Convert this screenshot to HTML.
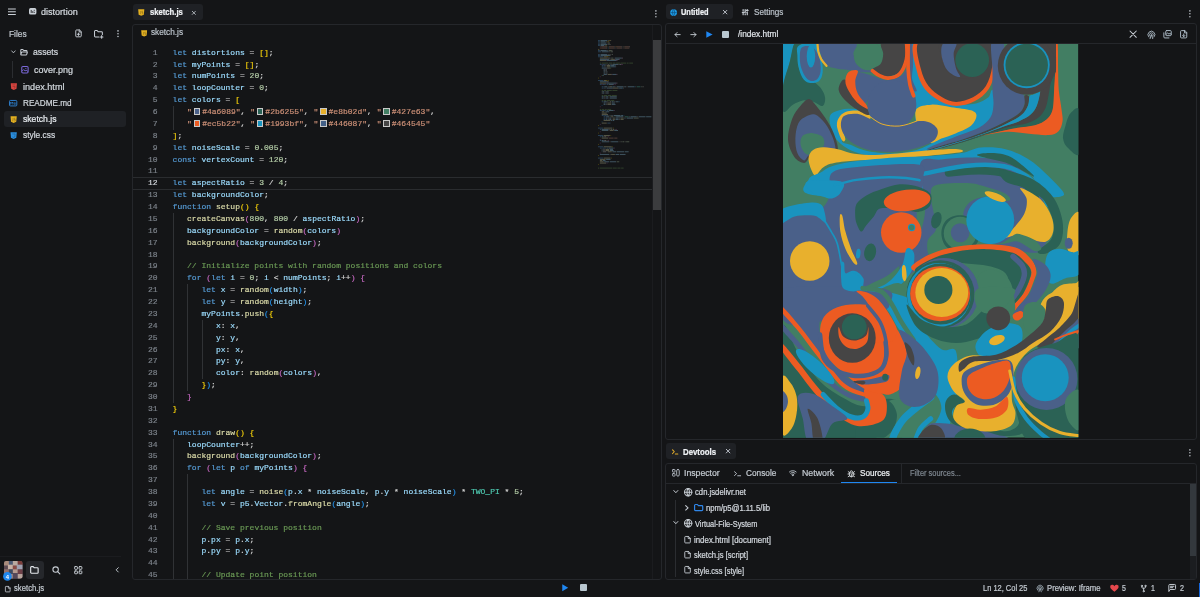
<!DOCTYPE html>
<html lang="en"><head><meta charset="utf-8"><title>distortion</title>
<style>
*{box-sizing:border-box;margin:0;padding:0}
html,body{width:1200px;height:597px;overflow:hidden;background:#141517}
#app{position:absolute;left:0;top:0;width:1200px;height:597px;will-change:transform}
body{font-family:"Liberation Sans",sans-serif;color:#d3d8de;position:relative;-webkit-font-smoothing:antialiased}
.a{position:absolute}
.t{position:absolute;transform-origin:0 50%;-webkit-text-stroke:0.22px currentColor;white-space:nowrap;line-height:12px;font-size:8.6px;color:#d3d8de}
.dim{color:#9aa2ab}
svg{position:absolute;overflow:visible}
.ic{fill:none;stroke:#c9cfd6;stroke-width:1.2;stroke-linecap:round;stroke-linejoin:round}
.panel{position:absolute;border:1px solid #25272b;border-radius:3px;background:#141517}
.tab{position:absolute;background:#1f2125;border-radius:3px}
/* code */
.ln,.cl{position:absolute;font-family:"Liberation Mono",monospace;font-size:8.02px;-webkit-text-stroke:0.18px currentColor;line-height:11.875px;height:11.875px;white-space:pre}
.ln{left:133px;width:24.5px;text-align:right;color:#7d838b}
.ln.cur{color:#d7dbe0}
.cl{left:172.6px;color:#d4d4d4}
.k{color:#569cd6}.v{color:#9cdcfe}.f{color:#dcdcaa}.n{color:#b5cea8}.s{color:#ce9178}.c{color:#6a9955}
.b1{color:#f0cc0a}.b2{color:#c568c0}.b3{color:#2492ea}.t2{color:#4ec9b0}
.cl .t{position:static}
.sw{display:inline-block;width:6.6px;height:6.6px;border:0.8px solid #c8c8c8;margin:0 1.85px 0 1.85px;vertical-align:-0.6px}
.ig{position:absolute;width:1px;background:#303235}

</style></head>
<body>
<div id="app">
<!-- ===== top bar ===== -->
<svg class="ic" style="left:7.7px;top:7.85px;stroke-width:1.15;stroke-linecap:butt" width="7.8" height="8" viewBox="0 0 7.8 8"><path d="M0 1h7.8M0 3.75h7.8M0 6.55h7.8"/></svg>
<svg style="left:28.5px;top:8.3px" width="7.4" height="6.6" viewBox="0 0 9 8"><rect x="0" y="0" width="9" height="8" rx="2" fill="#c9cfd6"/><path d="M2.7 2.4v3.6M4.6 3.8v2.2M6.4 2.2v1.2M6.4 4.6v1.4" stroke="#141517" stroke-width="1" fill="none"/></svg>
<div class="t" style="left:41.10px;top:6.00px;font-size:8.9px;transform:scaleX(1.019);">distortion</div>

<!-- ===== sidebar ===== -->
<div class="t" style="left:8.80px;top:27.50px;font-size:9.8px;transform:scaleX(0.855);color:#c3c9d0">Files</div>
<svg class="ic" style="left:75.4px;top:29.3px" width="7" height="8.8" viewBox="0 0 9 10"><path d="M5.4 0.6H2A1 1 0 0 0 1 1.6v6.8a1 1 0 0 0 1 1h5a1 1 0 0 0 1-1V3.2z M5.4 0.6v2.6H8 M4.5 4.6v3 M3 6.1h3"/></svg>
<svg class="ic" style="left:94px;top:29.6px" width="9.4" height="8.5" viewBox="0 0 11 10"><path d="M6 8.2H1.6a1 1 0 0 1-1-1V1.6a1 1 0 0 1 1-1h2l1.2 1.4h4a1 1 0 0 1 1 1V5.4 M9 6.6v3 M7.5 8.1h3"/></svg>
<svg style="left:117px;top:29.8px" width="2" height="7.4" viewBox="0 0 2 7.6"><circle cx="1" cy="0.9" r="0.8" fill="#c9cfd6"/><circle cx="1" cy="3.8" r="0.8" fill="#c9cfd6"/><circle cx="1" cy="6.7" r="0.8" fill="#c9cfd6"/></svg>

<div class="a" style="left:12.1px;top:60.5px;width:1px;height:17px;background:#2b2d31"></div>
<svg class="ic" style="left:11.1px;top:50.3px;stroke-width:1.2" width="4.9" height="3.9" viewBox="0 0 7 5"><path d="M1 1l2.5 2.8L6 1"/></svg>
<svg class="ic" style="left:20.1px;top:48.6px" width="8.1" height="6.7" viewBox="0 0 9 8"><path d="M0.6 6.6V1.4a.8.8 0 0 1 .8-.8h1.6l1 1.1h3.2a.8.8 0 0 1 .8.8v.9 M0.6 6.8l1-2.8a.7.7 0 0 1 .7-.5h5.6a.5.5 0 0 1 .5.7l-.8 2.4a.8.8 0 0 1-.7.5H1.2a.6.6 0 0 1-.6-.5z"/></svg>
<div class="t" style="left:32.90px;top:45.50px;font-size:9.4px;transform:scaleX(0.924);">assets</div>
<svg style="left:20.9px;top:66.2px" width="7.9" height="7.5" viewBox="0 0 8 8"><rect x="0.6" y="0.6" width="6.8" height="6.8" rx="1.2" fill="none" stroke="#7a68d8" stroke-width="1.1"/><path d="M0.8 5.6l1.8-1.8 1.6 1.4 1-.8 2 1.4" fill="none" stroke="#7a68d8" stroke-width="1"/><circle cx="5" cy="2.6" r="0.6" fill="#7a68d8"/></svg>
<div class="t" style="left:33.70px;top:63.50px;font-size:9.4px;transform:scaleX(0.959);">cover.png</div>

<svg style="left:9.9px;top:83px" width="7.7" height="7.2" viewBox="0 0 8 9"><path d="M0.1 0.3h7.8l-.6 6.9L4 8.7 .7 7.2z" fill="#d9453f"/><path d="M2.2 2.4h3.6M2.4 4.4h3.2l-.2 1.8L4 6.6" fill="none" stroke="#141517" stroke-width="0.6" opacity=".5"/></svg>
<div class="t" style="left:22.70px;top:80.50px;font-size:9.4px;transform:scaleX(0.971);">index.html</div>
<svg style="left:9.3px;top:99.6px" width="8.3" height="6.4" viewBox="0 0 9 7"><rect x="0.5" y="0.5" width="8" height="6" rx="1" fill="none" stroke="#2f86d8" stroke-width="1"/><path d="M1.8 5V2.2l1.2 1.4 1.2-1.4V5M6.4 2.2v2.6M5.4 3.8l1 1.2 1-1.2" fill="none" stroke="#2f86d8" stroke-width="0.8"/></svg>
<div class="t" style="left:22.70px;top:96.50px;font-size:9.4px;transform:scaleX(0.871);">README.md</div>
<div class="a" style="left:4.1px;top:111.3px;width:122.3px;height:15.4px;background:#1f2125;border-radius:3px"></div>
<svg style="left:9.9px;top:115.5px" width="7.3" height="7.2" viewBox="0 0 8 9"><path d="M0.1 0.3h7.8l-.6 6.9L4 8.7 .7 7.2z" fill="#e3b021"/><path d="M3.2 2.6v3.2l-1 .4M6 2.8H4.8v1.6H6v1.6l-1.2.4" fill="none" stroke="#141517" stroke-width="0.6" opacity=".5"/></svg>
<div class="t" style="left:22.70px;top:112.50px;font-size:9.4px;transform:scaleX(0.919);color:#e8ecf0">sketch.js</div>
<svg style="left:9.9px;top:131.7px" width="7.3" height="7.3" viewBox="0 0 8 9"><path d="M0.1 0.3h7.8l-.6 6.9L4 8.7 .7 7.2z" fill="#2a8fe0"/><path d="M2.2 2.4h3.6l-.3 3.6L4 6.6l-1.4-.6" fill="none" stroke="#141517" stroke-width="0.6" opacity=".5"/></svg>
<div class="t" style="left:22.70px;top:128.50px;font-size:9.4px;transform:scaleX(0.893);">style.css</div>

<!-- sidebar bottom -->
<div class="a" style="left:0;top:556px;width:121px;height:1px;background:#1b1c1f"></div>
<svg style="left:4.2px;top:561.3px" width="18.7" height="17.7" viewBox="0 0 19 19" preserveAspectRatio="none"><defs><clipPath id="avc"><rect width="19" height="19" rx="2.5"/></clipPath></defs><g clip-path="url(#avc)"><rect width="19" height="19" fill="#6b5f66"/><rect x="0" y="0" width="5" height="5" fill="#a98c7c"/><rect x="5" y="0" width="4" height="4" fill="#4a5a76"/><rect x="9" y="0" width="5" height="5" fill="#b9a9a0"/><rect x="14" y="0" width="5" height="4" fill="#7a3c3a"/><rect x="0" y="5" width="4" height="4" fill="#5d4a52"/><rect x="4" y="4" width="5" height="5" fill="#c7b1a5"/><rect x="9" y="5" width="4" height="4" fill="#8a4a44"/><rect x="13" y="4" width="6" height="5" fill="#9fa0b0"/><rect x="0" y="9" width="5" height="5" fill="#93706a"/><rect x="5" y="9" width="4" height="5" fill="#3f4a60"/><rect x="9" y="9" width="5" height="4" fill="#b59a90"/><rect x="14" y="9" width="5" height="5" fill="#6e4048"/><rect x="4" y="14" width="5" height="5" fill="#a78c86"/><rect x="9" y="13" width="5" height="6" fill="#54485a"/><rect x="14" y="14" width="5" height="5" fill="#b8a49c"/></g></svg>
<svg style="left:3.2px;top:571.8px" width="8.8" height="8.8" viewBox="0 0 9 9"><circle cx="4.5" cy="4.5" r="4.4" fill="#1e88f0"/><text x="4.5" y="6.7" font-size="6" font-family="Liberation Sans, sans-serif" font-weight="bold" text-anchor="middle" fill="#fff">4</text></svg>
<div class="a" style="left:25.5px;top:561.3px;width:18.5px;height:17.7px;background:#25272b;border-radius:3px"></div>
<svg class="ic" style="left:30.3px;top:565.7px;stroke:#e6eaee;stroke-width:1.3" width="8.8" height="7.8" viewBox="0 0 10 9"><path d="M0.7 7.4V1.6a.9.9 0 0 1 .9-.9h2l1.1 1.3h3.7a.9.9 0 0 1 .9.9v4.5a.9.9 0 0 1-.9.9H1.6a.9.9 0 0 1-.9-.9z"/></svg>
<svg class="ic" style="left:51.9px;top:566px;stroke-width:1.25" width="8.6" height="8.5" viewBox="0 0 10 10"><circle cx="4.2" cy="4.2" r="3.2"/><path d="M6.6 6.6l2.6 2.6"/></svg>
<svg class="ic" style="left:73.5px;top:565.7px;stroke-width:1.05" width="8.5" height="8.3" viewBox="0 0 9 9"><rect x="0.6" y="0.6" width="3" height="3" rx=".6"/><rect x="5.4" y="0.6" width="3" height="3" rx=".6"/><rect x="0.6" y="5.4" width="3" height="3" rx=".6"/><rect x="5.4" y="5.4" width="3" height="3" rx=".6"/></svg>
<svg class="ic" style="left:115px;top:567.2px;stroke-width:1.3" width="4.4" height="5.7" viewBox="0 0 5 8"><path d="M4 1L1 4l3 3"/></svg>

<!-- ===== editor tabs ===== -->
<div class="tab" style="left:132.5px;top:3.7px;width:70.4px;height:16px"></div>
<svg style="left:137.7px;top:8.7px" width="6.5" height="7.1" viewBox="0 0 8 9"><path d="M0.1 0.3h7.8l-.6 6.9L4 8.7 .7 7.2z" fill="#e3b021"/><path d="M3.2 2.6v3.2l-1 .4M6 2.8H4.8v1.6H6v1.6l-1.2.4" fill="none" stroke="#141517" stroke-width="0.6" opacity=".5"/></svg>
<div class="t" style="left:149.60px;top:6.00px;font-size:8.9px;transform:scaleX(0.864);color:#f0f3f6;font-weight:bold">sketch.js</div>
<svg class="ic" style="left:192.1px;top:10.5px;stroke-width:0.85;stroke-linecap:butt" width="3.7" height="3.7" viewBox="0 0 4 4"><path d="M0 0l4 4M4 0L0 4"/></svg>
<svg style="left:655.3px;top:9.8px" width="1.8" height="7.6" viewBox="0 0 2 7.6" preserveAspectRatio="none"><circle cx="1" cy="0.9" r="0.8" fill="#c9cfd6"/><circle cx="1" cy="3.8" r="0.8" fill="#c9cfd6"/><circle cx="1" cy="6.7" r="0.8" fill="#c9cfd6"/></svg>

<!-- ===== editor panel ===== -->
<div class="panel" style="left:132px;top:23.7px;width:530.3px;height:556px"></div>
<svg style="left:140.8px;top:30px" width="6.3" height="6.8" viewBox="0 0 8 9"><path d="M0.1 0.3h7.8l-.6 6.9L4 8.7 .7 7.2z" fill="#e3b021"/><path d="M3.2 2.6v3.2l-1 .4M6 2.8H4.8v1.6H6v1.6l-1.2.4" fill="none" stroke="#141517" stroke-width="0.6" opacity=".5"/></svg>
<div class="t" style="left:150.80px;top:26.00px;font-size:8.9px;transform:scaleX(0.927);color:#b9c0c8">sketch.js</div>
<!-- current line -->
<div class="a" style="left:133px;top:177.3px;width:519px;height:12.4px;border-top:1px solid #2a2c2f;border-bottom:1px solid #2a2c2f"></div>
<div class="ig" style="left:172.6px;top:106.08px;height:23.75px"></div><div class="ig" style="left:172.6px;top:212.95px;height:190.00px"></div><div class="ig" style="left:187.1px;top:284.20px;height:106.88px"></div><div class="ig" style="left:201.6px;top:319.82px;height:59.38px"></div><div class="ig" style="left:172.6px;top:438.57px;height:140.13px"></div><div class="ig" style="left:187.1px;top:474.20px;height:104.50px"></div>
<div class="ln" style="top:46.700px">1</div><div class="cl" style="top:46.700px"><span class="k">let</span> <span class="v">distortions</span> = <span class="b1">[]</span>;</div>
<div class="ln" style="top:58.575px">2</div><div class="cl" style="top:58.575px"><span class="k">let</span> <span class="v">myPoints</span> = <span class="b1">[]</span>;</div>
<div class="ln" style="top:70.450px">3</div><div class="cl" style="top:70.450px"><span class="k">let</span> <span class="v">numPoints</span> = <span class="n">20</span>;</div>
<div class="ln" style="top:82.325px">4</div><div class="cl" style="top:82.325px"><span class="k">let</span> <span class="v">loopCounter</span> = <span class="n">0</span>;</div>
<div class="ln" style="top:94.200px">5</div><div class="cl" style="top:94.200px"><span class="k">let</span> <span class="v">colors</span> = <span class="b1">[</span></div>
<div class="ln" style="top:106.075px">6</div><div class="cl" style="top:106.075px">   <span class="s">"</span><i class="sw" style="background:#4a6089"></i><span class="s">#4a6089"</span>, <span class="s">"</span><i class="sw" style="background:#2b6255"></i><span class="s">#2b6255"</span>, <span class="s">"</span><i class="sw" style="background:#e8b02d"></i><span class="s">#e8b02d"</span>, <span class="s">"</span><i class="sw" style="background:#427e63"></i><span class="s">#427e63"</span>,</div>
<div class="ln" style="top:117.950px">7</div><div class="cl" style="top:117.950px">   <span class="s">"</span><i class="sw" style="background:#ec5b22"></i><span class="s">#ec5b22"</span>, <span class="s">"</span><i class="sw" style="background:#1993bf"></i><span class="s">#1993bf"</span>, <span class="s">"</span><i class="sw" style="background:#446087"></i><span class="s">#446087"</span>, <span class="s">"</span><i class="sw" style="background:#464545"></i><span class="s">#464545"</span></div>
<div class="ln" style="top:129.825px">8</div><div class="cl" style="top:129.825px"><span class="b1">]</span>;</div>
<div class="ln" style="top:141.700px">9</div><div class="cl" style="top:141.700px"><span class="k">let</span> <span class="v">noiseScale</span> = <span class="n">0.005</span>;</div>
<div class="ln" style="top:153.575px">10</div><div class="cl" style="top:153.575px"><span class="k">const</span> <span class="v">vertexCount</span> = <span class="n">120</span>;</div>
<div class="ln" style="top:165.450px">11</div><div class="cl" style="top:165.450px"></div>
<div class="ln cur" style="top:177.325px">12</div><div class="cl" style="top:177.325px"><span class="k">let</span> <span class="v">aspectRatio</span> = <span class="n">3</span> / <span class="n">4</span>;</div>
<div class="ln" style="top:189.200px">13</div><div class="cl" style="top:189.200px"><span class="k">let</span> <span class="v">backgroundColor</span>;</div>
<div class="ln" style="top:201.075px">14</div><div class="cl" style="top:201.075px"><span class="k">function</span> <span class="f">setup</span><span class="b1">()</span> <span class="b1">{</span></div>
<div class="ln" style="top:212.950px">15</div><div class="cl" style="top:212.950px">   <span class="f">createCanvas</span><span class="b2">(</span><span class="n">800</span>, <span class="n">800</span> / <span class="v">aspectRatio</span><span class="b2">)</span>;</div>
<div class="ln" style="top:224.825px">16</div><div class="cl" style="top:224.825px">   <span class="v">backgroundColor</span> = <span class="f">random</span><span class="b2">(</span><span class="v">colors</span><span class="b2">)</span></div>
<div class="ln" style="top:236.700px">17</div><div class="cl" style="top:236.700px">   <span class="f">background</span><span class="b2">(</span><span class="v">backgroundColor</span><span class="b2">)</span>;</div>
<div class="ln" style="top:248.575px">18</div><div class="cl" style="top:248.575px"></div>
<div class="ln" style="top:260.450px">19</div><div class="cl" style="top:260.450px">   <span class="c">// Initialize points with random positions and colors</span></div>
<div class="ln" style="top:272.325px">20</div><div class="cl" style="top:272.325px">   <span class="k">for</span> <span class="b2">(</span><span class="k">let</span> <span class="v">i</span> = <span class="n">0</span>; <span class="v">i</span> &lt; <span class="v">numPoints</span>; <span class="v">i</span>++<span class="b2">)</span> <span class="b2">{</span></div>
<div class="ln" style="top:284.200px">21</div><div class="cl" style="top:284.200px">      <span class="k">let</span> <span class="v">x</span> = <span class="f">random</span><span class="b3">(</span><span class="v">width</span><span class="b3">)</span>;</div>
<div class="ln" style="top:296.075px">22</div><div class="cl" style="top:296.075px">      <span class="k">let</span> <span class="v">y</span> = <span class="f">random</span><span class="b3">(</span><span class="v">height</span><span class="b3">)</span>;</div>
<div class="ln" style="top:307.950px">23</div><div class="cl" style="top:307.950px">      <span class="v">myPoints</span>.<span class="f">push</span><span class="b3">(</span><span class="b1">{</span></div>
<div class="ln" style="top:319.825px">24</div><div class="cl" style="top:319.825px">         <span class="v">x</span>: <span class="v">x</span>,</div>
<div class="ln" style="top:331.700px">25</div><div class="cl" style="top:331.700px">         <span class="v">y</span>: <span class="v">y</span>,</div>
<div class="ln" style="top:343.575px">26</div><div class="cl" style="top:343.575px">         <span class="v">px</span>: <span class="v">x</span>,</div>
<div class="ln" style="top:355.450px">27</div><div class="cl" style="top:355.450px">         <span class="v">py</span>: <span class="v">y</span>,</div>
<div class="ln" style="top:367.325px">28</div><div class="cl" style="top:367.325px">         <span class="v">color</span>: <span class="f">random</span><span class="b2">(</span><span class="v">colors</span><span class="b2">)</span>,</div>
<div class="ln" style="top:379.200px">29</div><div class="cl" style="top:379.200px">      <span class="b1">}</span><span class="b3">)</span>;</div>
<div class="ln" style="top:391.075px">30</div><div class="cl" style="top:391.075px">   <span class="b2">}</span></div>
<div class="ln" style="top:402.950px">31</div><div class="cl" style="top:402.950px"><span class="b1">}</span></div>
<div class="ln" style="top:414.825px">32</div><div class="cl" style="top:414.825px"></div>
<div class="ln" style="top:426.700px">33</div><div class="cl" style="top:426.700px"><span class="k">function</span> <span class="f">draw</span><span class="b1">()</span> <span class="b1">{</span></div>
<div class="ln" style="top:438.575px">34</div><div class="cl" style="top:438.575px">   <span class="v">loopCounter</span>++;</div>
<div class="ln" style="top:450.450px">35</div><div class="cl" style="top:450.450px">   <span class="f">background</span><span class="b2">(</span><span class="v">backgroundColor</span><span class="b2">)</span>;</div>
<div class="ln" style="top:462.325px">36</div><div class="cl" style="top:462.325px">   <span class="k">for</span> <span class="b2">(</span><span class="k">let</span> <span class="v">p</span> <span class="k">of</span> <span class="v">myPoints</span><span class="b2">)</span> <span class="b2">{</span></div>
<div class="ln" style="top:474.200px">37</div><div class="cl" style="top:474.200px"></div>
<div class="ln" style="top:486.075px">38</div><div class="cl" style="top:486.075px">      <span class="k">let</span> <span class="v">angle</span> = <span class="f">noise</span><span class="b3">(</span><span class="v">p</span>.<span class="v">x</span> * <span class="v">noiseScale</span>, <span class="v">p</span>.<span class="v">y</span> * <span class="v">noiseScale</span><span class="b3">)</span> * <span class="t2">TWO_PI</span> * <span class="n">5</span>;</div>
<div class="ln" style="top:497.950px">39</div><div class="cl" style="top:497.950px">      <span class="k">let</span> <span class="v">v</span> = <span class="v">p5</span>.<span class="v">Vector</span>.<span class="f">fromAngle</span><span class="b3">(</span><span class="v">angle</span><span class="b3">)</span>;</div>
<div class="ln" style="top:509.825px">40</div><div class="cl" style="top:509.825px"></div>
<div class="ln" style="top:521.700px">41</div><div class="cl" style="top:521.700px">      <span class="c">// Save previous position</span></div>
<div class="ln" style="top:533.575px">42</div><div class="cl" style="top:533.575px">      <span class="v">p</span>.<span class="v">px</span> = <span class="v">p</span>.<span class="v">x</span>;</div>
<div class="ln" style="top:545.450px">43</div><div class="cl" style="top:545.450px">      <span class="v">p</span>.<span class="v">py</span> = <span class="v">p</span>.<span class="v">y</span>;</div>
<div class="ln" style="top:557.325px">44</div><div class="cl" style="top:557.325px"></div>
<div class="ln" style="top:569.200px">45</div><div class="cl" style="top:569.200px">      <span class="c">// Update point position</span></div>
<svg style="left:598.2px;top:39.6px" width="54" height="129.8" viewBox="0 0 54 129.8" opacity="0.42"><rect x="0.00" y="0.20" width="1.88" height="0.75" fill="#569cd6"/><rect x="2.50" y="0.20" width="6.88" height="0.75" fill="#9cdcfe"/><rect x="10.00" y="0.20" width="0.62" height="0.75" fill="#d4d4d4"/><rect x="11.25" y="0.20" width="1.25" height="0.75" fill="#ffd700"/><rect x="12.50" y="0.20" width="0.62" height="0.75" fill="#d4d4d4"/><rect x="0.00" y="1.45" width="1.88" height="0.75" fill="#569cd6"/><rect x="2.50" y="1.45" width="5.00" height="0.75" fill="#9cdcfe"/><rect x="8.12" y="1.45" width="0.62" height="0.75" fill="#d4d4d4"/><rect x="9.38" y="1.45" width="1.25" height="0.75" fill="#ffd700"/><rect x="10.62" y="1.45" width="0.62" height="0.75" fill="#d4d4d4"/><rect x="0.00" y="2.70" width="1.88" height="0.75" fill="#569cd6"/><rect x="2.50" y="2.70" width="5.62" height="0.75" fill="#9cdcfe"/><rect x="8.75" y="2.70" width="0.62" height="0.75" fill="#d4d4d4"/><rect x="10.00" y="2.70" width="1.25" height="0.75" fill="#b5cea8"/><rect x="11.25" y="2.70" width="0.62" height="0.75" fill="#d4d4d4"/><rect x="0.00" y="3.95" width="1.88" height="0.75" fill="#569cd6"/><rect x="2.50" y="3.95" width="6.88" height="0.75" fill="#9cdcfe"/><rect x="10.00" y="3.95" width="0.62" height="0.75" fill="#d4d4d4"/><rect x="11.25" y="3.95" width="0.62" height="0.75" fill="#b5cea8"/><rect x="11.88" y="3.95" width="0.62" height="0.75" fill="#d4d4d4"/><rect x="0.00" y="5.20" width="1.88" height="0.75" fill="#569cd6"/><rect x="2.50" y="5.20" width="3.75" height="0.75" fill="#9cdcfe"/><rect x="6.88" y="5.20" width="0.62" height="0.75" fill="#d4d4d4"/><rect x="8.12" y="5.20" width="0.62" height="0.75" fill="#ffd700"/><rect x="1.88" y="6.45" width="0.62" height="0.75" fill="#ce9178"/><rect x="2.50" y="6.45" width="0.81" height="0.75" fill="#4a6089"/><rect x="3.31" y="6.45" width="5.00" height="0.75" fill="#ce9178"/><rect x="8.31" y="6.45" width="0.62" height="0.75" fill="#d4d4d4"/><rect x="9.56" y="6.45" width="0.62" height="0.75" fill="#ce9178"/><rect x="10.19" y="6.45" width="0.81" height="0.75" fill="#2b6255"/><rect x="11.00" y="6.45" width="5.00" height="0.75" fill="#ce9178"/><rect x="16.00" y="6.45" width="0.62" height="0.75" fill="#d4d4d4"/><rect x="17.25" y="6.45" width="0.62" height="0.75" fill="#ce9178"/><rect x="17.88" y="6.45" width="0.81" height="0.75" fill="#e8b02d"/><rect x="18.69" y="6.45" width="5.00" height="0.75" fill="#ce9178"/><rect x="23.69" y="6.45" width="0.62" height="0.75" fill="#d4d4d4"/><rect x="24.94" y="6.45" width="0.62" height="0.75" fill="#ce9178"/><rect x="25.56" y="6.45" width="0.81" height="0.75" fill="#427e63"/><rect x="26.38" y="6.45" width="5.00" height="0.75" fill="#ce9178"/><rect x="31.38" y="6.45" width="0.62" height="0.75" fill="#d4d4d4"/><rect x="1.88" y="7.70" width="0.62" height="0.75" fill="#ce9178"/><rect x="2.50" y="7.70" width="0.81" height="0.75" fill="#ec5b22"/><rect x="3.31" y="7.70" width="5.00" height="0.75" fill="#ce9178"/><rect x="8.31" y="7.70" width="0.62" height="0.75" fill="#d4d4d4"/><rect x="9.56" y="7.70" width="0.62" height="0.75" fill="#ce9178"/><rect x="10.19" y="7.70" width="0.81" height="0.75" fill="#1993bf"/><rect x="11.00" y="7.70" width="5.00" height="0.75" fill="#ce9178"/><rect x="16.00" y="7.70" width="0.62" height="0.75" fill="#d4d4d4"/><rect x="17.25" y="7.70" width="0.62" height="0.75" fill="#ce9178"/><rect x="17.88" y="7.70" width="0.81" height="0.75" fill="#446087"/><rect x="18.69" y="7.70" width="5.00" height="0.75" fill="#ce9178"/><rect x="23.69" y="7.70" width="0.62" height="0.75" fill="#d4d4d4"/><rect x="24.94" y="7.70" width="0.62" height="0.75" fill="#ce9178"/><rect x="25.56" y="7.70" width="0.81" height="0.75" fill="#464545"/><rect x="26.38" y="7.70" width="5.00" height="0.75" fill="#ce9178"/><rect x="0.00" y="8.95" width="0.62" height="0.75" fill="#ffd700"/><rect x="0.62" y="8.95" width="0.62" height="0.75" fill="#d4d4d4"/><rect x="0.00" y="10.20" width="1.88" height="0.75" fill="#569cd6"/><rect x="2.50" y="10.20" width="6.25" height="0.75" fill="#9cdcfe"/><rect x="9.38" y="10.20" width="0.62" height="0.75" fill="#d4d4d4"/><rect x="10.62" y="10.20" width="3.12" height="0.75" fill="#b5cea8"/><rect x="13.75" y="10.20" width="0.62" height="0.75" fill="#d4d4d4"/><rect x="0.00" y="11.45" width="3.12" height="0.75" fill="#569cd6"/><rect x="3.75" y="11.45" width="6.88" height="0.75" fill="#9cdcfe"/><rect x="11.25" y="11.45" width="0.62" height="0.75" fill="#d4d4d4"/><rect x="12.50" y="11.45" width="1.88" height="0.75" fill="#b5cea8"/><rect x="14.38" y="11.45" width="0.62" height="0.75" fill="#d4d4d4"/><rect x="0.00" y="13.95" width="1.88" height="0.75" fill="#569cd6"/><rect x="2.50" y="13.95" width="6.88" height="0.75" fill="#9cdcfe"/><rect x="10.00" y="13.95" width="0.62" height="0.75" fill="#d4d4d4"/><rect x="11.25" y="13.95" width="0.62" height="0.75" fill="#b5cea8"/><rect x="12.50" y="13.95" width="0.62" height="0.75" fill="#d4d4d4"/><rect x="13.75" y="13.95" width="0.62" height="0.75" fill="#b5cea8"/><rect x="14.38" y="13.95" width="0.62" height="0.75" fill="#d4d4d4"/><rect x="0.00" y="15.20" width="1.88" height="0.75" fill="#569cd6"/><rect x="2.50" y="15.20" width="9.38" height="0.75" fill="#9cdcfe"/><rect x="11.88" y="15.20" width="0.62" height="0.75" fill="#d4d4d4"/><rect x="0.00" y="16.45" width="5.00" height="0.75" fill="#569cd6"/><rect x="5.62" y="16.45" width="3.12" height="0.75" fill="#dcdcaa"/><rect x="8.75" y="16.45" width="1.25" height="0.75" fill="#ffd700"/><rect x="10.62" y="16.45" width="0.62" height="0.75" fill="#ffd700"/><rect x="1.88" y="17.70" width="7.50" height="0.75" fill="#dcdcaa"/><rect x="9.38" y="17.70" width="0.62" height="0.75" fill="#da70d6"/><rect x="10.00" y="17.70" width="1.88" height="0.75" fill="#b5cea8"/><rect x="11.88" y="17.70" width="0.62" height="0.75" fill="#d4d4d4"/><rect x="13.12" y="17.70" width="1.88" height="0.75" fill="#b5cea8"/><rect x="15.62" y="17.70" width="0.62" height="0.75" fill="#d4d4d4"/><rect x="16.88" y="17.70" width="6.88" height="0.75" fill="#9cdcfe"/><rect x="23.75" y="17.70" width="0.62" height="0.75" fill="#da70d6"/><rect x="24.38" y="17.70" width="0.62" height="0.75" fill="#d4d4d4"/><rect x="1.88" y="18.95" width="9.38" height="0.75" fill="#9cdcfe"/><rect x="11.88" y="18.95" width="0.62" height="0.75" fill="#d4d4d4"/><rect x="13.12" y="18.95" width="3.75" height="0.75" fill="#dcdcaa"/><rect x="16.88" y="18.95" width="0.62" height="0.75" fill="#da70d6"/><rect x="17.50" y="18.95" width="3.75" height="0.75" fill="#9cdcfe"/><rect x="21.25" y="18.95" width="0.62" height="0.75" fill="#da70d6"/><rect x="1.88" y="20.20" width="6.25" height="0.75" fill="#dcdcaa"/><rect x="8.12" y="20.20" width="0.62" height="0.75" fill="#da70d6"/><rect x="8.75" y="20.20" width="9.38" height="0.75" fill="#9cdcfe"/><rect x="18.12" y="20.20" width="0.62" height="0.75" fill="#da70d6"/><rect x="18.75" y="20.20" width="0.62" height="0.75" fill="#d4d4d4"/><rect x="1.88" y="22.70" width="1.25" height="0.75" fill="#6a9955"/><rect x="3.75" y="22.70" width="6.25" height="0.75" fill="#6a9955"/><rect x="10.62" y="22.70" width="3.75" height="0.75" fill="#6a9955"/><rect x="15.00" y="22.70" width="2.50" height="0.75" fill="#6a9955"/><rect x="18.12" y="22.70" width="3.75" height="0.75" fill="#6a9955"/><rect x="22.50" y="22.70" width="5.62" height="0.75" fill="#6a9955"/><rect x="28.75" y="22.70" width="1.88" height="0.75" fill="#6a9955"/><rect x="31.25" y="22.70" width="3.75" height="0.75" fill="#6a9955"/><rect x="1.88" y="23.95" width="1.88" height="0.75" fill="#569cd6"/><rect x="4.38" y="23.95" width="0.62" height="0.75" fill="#da70d6"/><rect x="5.00" y="23.95" width="1.88" height="0.75" fill="#569cd6"/><rect x="7.50" y="23.95" width="0.62" height="0.75" fill="#9cdcfe"/><rect x="8.75" y="23.95" width="0.62" height="0.75" fill="#d4d4d4"/><rect x="10.00" y="23.95" width="0.62" height="0.75" fill="#b5cea8"/><rect x="10.62" y="23.95" width="0.62" height="0.75" fill="#d4d4d4"/><rect x="11.88" y="23.95" width="0.62" height="0.75" fill="#9cdcfe"/><rect x="13.12" y="23.95" width="0.62" height="0.75" fill="#d4d4d4"/><rect x="14.38" y="23.95" width="5.62" height="0.75" fill="#9cdcfe"/><rect x="20.00" y="23.95" width="0.62" height="0.75" fill="#d4d4d4"/><rect x="21.25" y="23.95" width="0.62" height="0.75" fill="#9cdcfe"/><rect x="21.88" y="23.95" width="1.25" height="0.75" fill="#d4d4d4"/><rect x="23.12" y="23.95" width="0.62" height="0.75" fill="#da70d6"/><rect x="24.38" y="23.95" width="0.62" height="0.75" fill="#da70d6"/><rect x="3.75" y="25.20" width="1.88" height="0.75" fill="#569cd6"/><rect x="6.25" y="25.20" width="0.62" height="0.75" fill="#9cdcfe"/><rect x="7.50" y="25.20" width="0.62" height="0.75" fill="#d4d4d4"/><rect x="8.75" y="25.20" width="3.75" height="0.75" fill="#dcdcaa"/><rect x="12.50" y="25.20" width="0.62" height="0.75" fill="#179fff"/><rect x="13.12" y="25.20" width="3.12" height="0.75" fill="#9cdcfe"/><rect x="16.25" y="25.20" width="0.62" height="0.75" fill="#179fff"/><rect x="16.88" y="25.20" width="0.62" height="0.75" fill="#d4d4d4"/><rect x="3.75" y="26.45" width="1.88" height="0.75" fill="#569cd6"/><rect x="6.25" y="26.45" width="0.62" height="0.75" fill="#9cdcfe"/><rect x="7.50" y="26.45" width="0.62" height="0.75" fill="#d4d4d4"/><rect x="8.75" y="26.45" width="3.75" height="0.75" fill="#dcdcaa"/><rect x="12.50" y="26.45" width="0.62" height="0.75" fill="#179fff"/><rect x="13.12" y="26.45" width="3.75" height="0.75" fill="#9cdcfe"/><rect x="16.88" y="26.45" width="0.62" height="0.75" fill="#179fff"/><rect x="17.50" y="26.45" width="0.62" height="0.75" fill="#d4d4d4"/><rect x="3.75" y="27.70" width="5.00" height="0.75" fill="#9cdcfe"/><rect x="8.75" y="27.70" width="0.62" height="0.75" fill="#d4d4d4"/><rect x="9.38" y="27.70" width="2.50" height="0.75" fill="#dcdcaa"/><rect x="11.88" y="27.70" width="0.62" height="0.75" fill="#179fff"/><rect x="12.50" y="27.70" width="0.62" height="0.75" fill="#ffd700"/><rect x="5.62" y="28.95" width="0.62" height="0.75" fill="#9cdcfe"/><rect x="6.25" y="28.95" width="0.62" height="0.75" fill="#d4d4d4"/><rect x="7.50" y="28.95" width="0.62" height="0.75" fill="#9cdcfe"/><rect x="8.12" y="28.95" width="0.62" height="0.75" fill="#d4d4d4"/><rect x="5.62" y="30.20" width="0.62" height="0.75" fill="#9cdcfe"/><rect x="6.25" y="30.20" width="0.62" height="0.75" fill="#d4d4d4"/><rect x="7.50" y="30.20" width="0.62" height="0.75" fill="#9cdcfe"/><rect x="8.12" y="30.20" width="0.62" height="0.75" fill="#d4d4d4"/><rect x="5.62" y="31.45" width="1.25" height="0.75" fill="#9cdcfe"/><rect x="6.88" y="31.45" width="0.62" height="0.75" fill="#d4d4d4"/><rect x="8.12" y="31.45" width="0.62" height="0.75" fill="#9cdcfe"/><rect x="8.75" y="31.45" width="0.62" height="0.75" fill="#d4d4d4"/><rect x="5.62" y="32.70" width="1.25" height="0.75" fill="#9cdcfe"/><rect x="6.88" y="32.70" width="0.62" height="0.75" fill="#d4d4d4"/><rect x="8.12" y="32.70" width="0.62" height="0.75" fill="#9cdcfe"/><rect x="8.75" y="32.70" width="0.62" height="0.75" fill="#d4d4d4"/><rect x="5.62" y="33.95" width="3.12" height="0.75" fill="#9cdcfe"/><rect x="8.75" y="33.95" width="0.62" height="0.75" fill="#d4d4d4"/><rect x="10.00" y="33.95" width="3.75" height="0.75" fill="#dcdcaa"/><rect x="13.75" y="33.95" width="0.62" height="0.75" fill="#da70d6"/><rect x="14.38" y="33.95" width="3.75" height="0.75" fill="#9cdcfe"/><rect x="18.12" y="33.95" width="0.62" height="0.75" fill="#da70d6"/><rect x="18.75" y="33.95" width="0.62" height="0.75" fill="#d4d4d4"/><rect x="3.75" y="35.20" width="0.62" height="0.75" fill="#ffd700"/><rect x="4.38" y="35.20" width="0.62" height="0.75" fill="#179fff"/><rect x="5.00" y="35.20" width="0.62" height="0.75" fill="#d4d4d4"/><rect x="1.88" y="36.45" width="0.62" height="0.75" fill="#da70d6"/><rect x="0.00" y="37.70" width="0.62" height="0.75" fill="#ffd700"/><rect x="0.00" y="40.20" width="5.00" height="0.75" fill="#569cd6"/><rect x="5.62" y="40.20" width="2.50" height="0.75" fill="#dcdcaa"/><rect x="8.12" y="40.20" width="1.25" height="0.75" fill="#ffd700"/><rect x="10.00" y="40.20" width="0.62" height="0.75" fill="#ffd700"/><rect x="1.88" y="41.45" width="6.88" height="0.75" fill="#9cdcfe"/><rect x="8.75" y="41.45" width="1.88" height="0.75" fill="#d4d4d4"/><rect x="1.88" y="42.70" width="6.25" height="0.75" fill="#dcdcaa"/><rect x="8.12" y="42.70" width="0.62" height="0.75" fill="#da70d6"/><rect x="8.75" y="42.70" width="9.38" height="0.75" fill="#9cdcfe"/><rect x="18.12" y="42.70" width="0.62" height="0.75" fill="#da70d6"/><rect x="18.75" y="42.70" width="0.62" height="0.75" fill="#d4d4d4"/><rect x="1.88" y="43.95" width="1.88" height="0.75" fill="#569cd6"/><rect x="4.38" y="43.95" width="0.62" height="0.75" fill="#da70d6"/><rect x="5.00" y="43.95" width="1.88" height="0.75" fill="#569cd6"/><rect x="7.50" y="43.95" width="0.62" height="0.75" fill="#9cdcfe"/><rect x="8.75" y="43.95" width="1.25" height="0.75" fill="#569cd6"/><rect x="10.62" y="43.95" width="5.00" height="0.75" fill="#9cdcfe"/><rect x="15.62" y="43.95" width="0.62" height="0.75" fill="#da70d6"/><rect x="16.88" y="43.95" width="0.62" height="0.75" fill="#da70d6"/><rect x="3.75" y="46.45" width="1.88" height="0.75" fill="#569cd6"/><rect x="6.25" y="46.45" width="3.12" height="0.75" fill="#9cdcfe"/><rect x="10.00" y="46.45" width="0.62" height="0.75" fill="#d4d4d4"/><rect x="11.25" y="46.45" width="3.12" height="0.75" fill="#dcdcaa"/><rect x="14.38" y="46.45" width="0.62" height="0.75" fill="#179fff"/><rect x="15.00" y="46.45" width="0.62" height="0.75" fill="#9cdcfe"/><rect x="15.62" y="46.45" width="0.62" height="0.75" fill="#d4d4d4"/><rect x="16.25" y="46.45" width="0.62" height="0.75" fill="#9cdcfe"/><rect x="17.50" y="46.45" width="0.62" height="0.75" fill="#d4d4d4"/><rect x="18.75" y="46.45" width="6.25" height="0.75" fill="#9cdcfe"/><rect x="25.00" y="46.45" width="0.62" height="0.75" fill="#d4d4d4"/><rect x="26.25" y="46.45" width="0.62" height="0.75" fill="#9cdcfe"/><rect x="26.88" y="46.45" width="0.62" height="0.75" fill="#d4d4d4"/><rect x="27.50" y="46.45" width="0.62" height="0.75" fill="#9cdcfe"/><rect x="28.75" y="46.45" width="0.62" height="0.75" fill="#d4d4d4"/><rect x="30.00" y="46.45" width="6.25" height="0.75" fill="#9cdcfe"/><rect x="36.25" y="46.45" width="0.62" height="0.75" fill="#179fff"/><rect x="37.50" y="46.45" width="0.62" height="0.75" fill="#d4d4d4"/><rect x="38.75" y="46.45" width="3.75" height="0.75" fill="#4ec9b0"/><rect x="43.12" y="46.45" width="0.62" height="0.75" fill="#d4d4d4"/><rect x="44.38" y="46.45" width="0.62" height="0.75" fill="#b5cea8"/><rect x="45.00" y="46.45" width="0.62" height="0.75" fill="#d4d4d4"/><rect x="3.75" y="47.70" width="1.88" height="0.75" fill="#569cd6"/><rect x="6.25" y="47.70" width="0.62" height="0.75" fill="#9cdcfe"/><rect x="7.50" y="47.70" width="0.62" height="0.75" fill="#d4d4d4"/><rect x="8.75" y="47.70" width="1.25" height="0.75" fill="#9cdcfe"/><rect x="10.00" y="47.70" width="0.62" height="0.75" fill="#d4d4d4"/><rect x="10.62" y="47.70" width="3.75" height="0.75" fill="#9cdcfe"/><rect x="14.38" y="47.70" width="0.62" height="0.75" fill="#d4d4d4"/><rect x="15.00" y="47.70" width="5.62" height="0.75" fill="#dcdcaa"/><rect x="20.62" y="47.70" width="0.62" height="0.75" fill="#179fff"/><rect x="21.25" y="47.70" width="3.12" height="0.75" fill="#9cdcfe"/><rect x="24.38" y="47.70" width="0.62" height="0.75" fill="#179fff"/><rect x="25.00" y="47.70" width="0.62" height="0.75" fill="#d4d4d4"/><rect x="3.75" y="50.20" width="1.25" height="0.75" fill="#6a9955"/><rect x="5.62" y="50.20" width="2.50" height="0.75" fill="#6a9955"/><rect x="8.75" y="50.20" width="5.00" height="0.75" fill="#6a9955"/><rect x="14.38" y="50.20" width="5.00" height="0.75" fill="#6a9955"/><rect x="3.75" y="51.45" width="0.62" height="0.75" fill="#9cdcfe"/><rect x="4.38" y="51.45" width="0.62" height="0.75" fill="#d4d4d4"/><rect x="5.00" y="51.45" width="1.25" height="0.75" fill="#9cdcfe"/><rect x="6.88" y="51.45" width="0.62" height="0.75" fill="#d4d4d4"/><rect x="8.12" y="51.45" width="0.62" height="0.75" fill="#9cdcfe"/><rect x="8.75" y="51.45" width="0.62" height="0.75" fill="#d4d4d4"/><rect x="9.38" y="51.45" width="0.62" height="0.75" fill="#9cdcfe"/><rect x="10.00" y="51.45" width="0.62" height="0.75" fill="#d4d4d4"/><rect x="3.75" y="52.70" width="0.62" height="0.75" fill="#9cdcfe"/><rect x="4.38" y="52.70" width="0.62" height="0.75" fill="#d4d4d4"/><rect x="5.00" y="52.70" width="1.25" height="0.75" fill="#9cdcfe"/><rect x="6.88" y="52.70" width="0.62" height="0.75" fill="#d4d4d4"/><rect x="8.12" y="52.70" width="0.62" height="0.75" fill="#9cdcfe"/><rect x="8.75" y="52.70" width="0.62" height="0.75" fill="#d4d4d4"/><rect x="9.38" y="52.70" width="0.62" height="0.75" fill="#9cdcfe"/><rect x="10.00" y="52.70" width="0.62" height="0.75" fill="#d4d4d4"/><rect x="3.75" y="55.20" width="1.25" height="0.75" fill="#6a9955"/><rect x="5.62" y="55.20" width="3.75" height="0.75" fill="#6a9955"/><rect x="10.00" y="55.20" width="3.12" height="0.75" fill="#6a9955"/><rect x="13.75" y="55.20" width="5.00" height="0.75" fill="#6a9955"/><rect x="3.75" y="56.45" width="1.88" height="0.75" fill="#9cdcfe"/><rect x="6.25" y="56.45" width="1.25" height="0.75" fill="#d4d4d4"/><rect x="8.12" y="56.45" width="1.88" height="0.75" fill="#9cdcfe"/><rect x="10.62" y="56.45" width="0.62" height="0.75" fill="#d4d4d4"/><rect x="11.88" y="56.45" width="6.88" height="0.75" fill="#9cdcfe"/><rect x="3.75" y="57.70" width="1.88" height="0.75" fill="#9cdcfe"/><rect x="6.25" y="57.70" width="1.25" height="0.75" fill="#d4d4d4"/><rect x="8.12" y="57.70" width="1.88" height="0.75" fill="#9cdcfe"/><rect x="10.62" y="57.70" width="0.62" height="0.75" fill="#d4d4d4"/><rect x="11.88" y="57.70" width="6.88" height="0.75" fill="#9cdcfe"/><rect x="3.75" y="60.20" width="1.25" height="0.75" fill="#6a9955"/><rect x="5.62" y="60.20" width="2.50" height="0.75" fill="#6a9955"/><rect x="8.75" y="60.20" width="3.75" height="0.75" fill="#6a9955"/><rect x="13.12" y="60.20" width="3.12" height="0.75" fill="#6a9955"/><rect x="3.75" y="61.45" width="1.25" height="0.75" fill="#569cd6"/><rect x="5.62" y="61.45" width="3.12" height="0.75" fill="#9cdcfe"/><rect x="9.38" y="61.45" width="0.62" height="0.75" fill="#d4d4d4"/><rect x="10.62" y="61.45" width="0.62" height="0.75" fill="#b5cea8"/><rect x="11.88" y="61.45" width="1.25" height="0.75" fill="#d4d4d4"/><rect x="13.75" y="61.45" width="1.88" height="0.75" fill="#9cdcfe"/><rect x="16.25" y="61.45" width="0.62" height="0.75" fill="#d4d4d4"/><rect x="17.50" y="61.45" width="3.12" height="0.75" fill="#9cdcfe"/><rect x="21.25" y="61.45" width="0.62" height="0.75" fill="#179fff"/><rect x="5.62" y="62.70" width="1.88" height="0.75" fill="#9cdcfe"/><rect x="8.12" y="62.70" width="0.62" height="0.75" fill="#d4d4d4"/><rect x="9.38" y="62.70" width="3.75" height="0.75" fill="#dcdcaa"/><rect x="13.75" y="62.70" width="3.12" height="0.75" fill="#9cdcfe"/><rect x="5.62" y="63.95" width="1.88" height="0.75" fill="#9cdcfe"/><rect x="8.12" y="63.95" width="0.62" height="0.75" fill="#d4d4d4"/><rect x="9.38" y="63.95" width="3.75" height="0.75" fill="#dcdcaa"/><rect x="13.75" y="63.95" width="3.75" height="0.75" fill="#9cdcfe"/><rect x="3.75" y="65.20" width="0.62" height="0.75" fill="#179fff"/><rect x="1.88" y="66.45" width="0.62" height="0.75" fill="#da70d6"/><rect x="1.88" y="68.95" width="1.25" height="0.75" fill="#6a9955"/><rect x="3.75" y="68.95" width="2.50" height="0.75" fill="#6a9955"/><rect x="6.88" y="68.95" width="1.88" height="0.75" fill="#6a9955"/><rect x="9.38" y="68.95" width="3.75" height="0.75" fill="#6a9955"/><rect x="1.88" y="70.20" width="1.88" height="0.75" fill="#569cd6"/><rect x="4.38" y="70.20" width="2.50" height="0.75" fill="#569cd6"/><rect x="7.50" y="70.20" width="0.62" height="0.75" fill="#9cdcfe"/><rect x="8.75" y="70.20" width="1.25" height="0.75" fill="#569cd6"/><rect x="10.62" y="70.20" width="5.00" height="0.75" fill="#9cdcfe"/><rect x="16.25" y="70.20" width="0.62" height="0.75" fill="#da70d6"/><rect x="3.75" y="71.45" width="2.50" height="0.75" fill="#dcdcaa"/><rect x="6.88" y="71.45" width="0.62" height="0.75" fill="#9cdcfe"/><rect x="8.12" y="71.45" width="3.12" height="0.75" fill="#9cdcfe"/><rect x="3.75" y="72.70" width="5.00" height="0.75" fill="#dcdcaa"/><rect x="3.75" y="73.95" width="6.25" height="0.75" fill="#dcdcaa"/><rect x="3.75" y="75.20" width="1.88" height="0.75" fill="#569cd6"/><rect x="6.25" y="75.20" width="2.50" height="0.75" fill="#569cd6"/><rect x="9.38" y="75.20" width="0.62" height="0.75" fill="#9cdcfe"/><rect x="10.62" y="75.20" width="0.62" height="0.75" fill="#d4d4d4"/><rect x="11.88" y="75.20" width="0.62" height="0.75" fill="#b5cea8"/><rect x="13.12" y="75.20" width="0.62" height="0.75" fill="#9cdcfe"/><rect x="14.38" y="75.20" width="0.62" height="0.75" fill="#d4d4d4"/><rect x="15.62" y="75.20" width="6.88" height="0.75" fill="#9cdcfe"/><rect x="23.12" y="75.20" width="1.88" height="0.75" fill="#9cdcfe"/><rect x="25.62" y="75.20" width="0.62" height="0.75" fill="#179fff"/><rect x="5.62" y="76.45" width="1.88" height="0.75" fill="#569cd6"/><rect x="8.12" y="76.45" width="3.12" height="0.75" fill="#9cdcfe"/><rect x="11.88" y="76.45" width="0.62" height="0.75" fill="#d4d4d4"/><rect x="13.12" y="76.45" width="1.88" height="0.75" fill="#dcdcaa"/><rect x="15.62" y="76.45" width="0.62" height="0.75" fill="#9cdcfe"/><rect x="16.88" y="76.45" width="0.62" height="0.75" fill="#b5cea8"/><rect x="18.12" y="76.45" width="6.88" height="0.75" fill="#9cdcfe"/><rect x="25.62" y="76.45" width="0.62" height="0.75" fill="#b5cea8"/><rect x="26.88" y="76.45" width="3.75" height="0.75" fill="#4ec9b0"/><rect x="31.25" y="76.45" width="0.62" height="0.75" fill="#d4d4d4"/><rect x="32.50" y="76.45" width="6.25" height="0.75" fill="#9cdcfe"/><rect x="39.38" y="76.45" width="0.62" height="0.75" fill="#d4d4d4"/><rect x="40.62" y="76.45" width="6.88" height="0.75" fill="#9cdcfe"/><rect x="48.12" y="76.45" width="5.00" height="0.75" fill="#9cdcfe"/><rect x="53.75" y="76.45" width="3.75" height="0.75" fill="#9cdcfe"/><rect x="5.62" y="77.70" width="1.88" height="0.75" fill="#569cd6"/><rect x="8.12" y="77.70" width="1.25" height="0.75" fill="#9cdcfe"/><rect x="10.00" y="77.70" width="0.62" height="0.75" fill="#d4d4d4"/><rect x="11.25" y="77.70" width="1.88" height="0.75" fill="#9cdcfe"/><rect x="13.75" y="77.70" width="0.62" height="0.75" fill="#d4d4d4"/><rect x="15.00" y="77.70" width="1.88" height="0.75" fill="#dcdcaa"/><rect x="17.50" y="77.70" width="3.12" height="0.75" fill="#9cdcfe"/><rect x="21.25" y="77.70" width="0.62" height="0.75" fill="#d4d4d4"/><rect x="22.50" y="77.70" width="3.12" height="0.75" fill="#dcdcaa"/><rect x="26.25" y="77.70" width="0.62" height="0.75" fill="#9cdcfe"/><rect x="27.50" y="77.70" width="0.62" height="0.75" fill="#d4d4d4"/><rect x="28.75" y="77.70" width="6.25" height="0.75" fill="#9cdcfe"/><rect x="35.62" y="77.70" width="5.00" height="0.75" fill="#b5cea8"/><rect x="5.62" y="78.95" width="1.88" height="0.75" fill="#569cd6"/><rect x="8.12" y="78.95" width="1.25" height="0.75" fill="#9cdcfe"/><rect x="10.00" y="78.95" width="0.62" height="0.75" fill="#d4d4d4"/><rect x="11.25" y="78.95" width="1.88" height="0.75" fill="#9cdcfe"/><rect x="13.75" y="78.95" width="0.62" height="0.75" fill="#d4d4d4"/><rect x="15.00" y="78.95" width="1.88" height="0.75" fill="#dcdcaa"/><rect x="17.50" y="78.95" width="3.12" height="0.75" fill="#9cdcfe"/><rect x="21.25" y="78.95" width="0.62" height="0.75" fill="#d4d4d4"/><rect x="22.50" y="78.95" width="3.12" height="0.75" fill="#dcdcaa"/><rect x="5.62" y="80.20" width="6.88" height="0.75" fill="#dcdcaa"/><rect x="13.12" y="80.20" width="1.25" height="0.75" fill="#9cdcfe"/><rect x="15.00" y="80.20" width="1.25" height="0.75" fill="#9cdcfe"/><rect x="3.75" y="81.45" width="0.62" height="0.75" fill="#179fff"/><rect x="3.75" y="82.70" width="5.00" height="0.75" fill="#dcdcaa"/><rect x="9.38" y="82.70" width="3.12" height="0.75" fill="#569cd6"/><rect x="1.88" y="83.95" width="0.62" height="0.75" fill="#da70d6"/><rect x="0.00" y="85.20" width="0.62" height="0.75" fill="#ffd700"/><rect x="0.00" y="87.70" width="5.00" height="0.75" fill="#569cd6"/><rect x="5.62" y="87.70" width="8.75" height="0.75" fill="#dcdcaa"/><rect x="15.00" y="87.70" width="0.62" height="0.75" fill="#ffd700"/><rect x="1.88" y="88.95" width="1.25" height="0.75" fill="#569cd6"/><rect x="3.75" y="88.95" width="6.88" height="0.75" fill="#9cdcfe"/><rect x="11.25" y="88.95" width="0.62" height="0.75" fill="#d4d4d4"/><rect x="12.50" y="88.95" width="1.88" height="0.75" fill="#b5cea8"/><rect x="15.00" y="88.95" width="1.25" height="0.75" fill="#d4d4d4"/><rect x="16.88" y="88.95" width="0.62" height="0.75" fill="#b5cea8"/><rect x="18.12" y="88.95" width="0.62" height="0.75" fill="#da70d6"/><rect x="3.75" y="90.20" width="6.25" height="0.75" fill="#9cdcfe"/><rect x="10.62" y="90.20" width="0.62" height="0.75" fill="#d4d4d4"/><rect x="11.88" y="90.20" width="3.75" height="0.75" fill="#dcdcaa"/><rect x="16.25" y="90.20" width="3.75" height="0.75" fill="#9cdcfe"/><rect x="1.88" y="91.45" width="0.62" height="0.75" fill="#da70d6"/><rect x="0.00" y="92.70" width="0.62" height="0.75" fill="#ffd700"/><rect x="0.00" y="95.20" width="5.00" height="0.75" fill="#569cd6"/><rect x="5.62" y="95.20" width="6.25" height="0.75" fill="#dcdcaa"/><rect x="12.50" y="95.20" width="0.62" height="0.75" fill="#ffd700"/><rect x="1.88" y="96.45" width="1.25" height="0.75" fill="#569cd6"/><rect x="3.75" y="96.45" width="1.88" height="0.75" fill="#9cdcfe"/><rect x="6.25" y="96.45" width="1.88" height="0.75" fill="#d4d4d4"/><rect x="8.75" y="96.45" width="0.62" height="0.75" fill="#ce9178"/><rect x="10.00" y="96.45" width="0.62" height="0.75" fill="#da70d6"/><rect x="3.75" y="97.70" width="6.25" height="0.75" fill="#dcdcaa"/><rect x="10.62" y="97.70" width="5.00" height="0.75" fill="#ce9178"/><rect x="16.25" y="97.70" width="3.12" height="0.75" fill="#ce9178"/><rect x="1.88" y="98.95" width="0.62" height="0.75" fill="#da70d6"/><rect x="1.88" y="100.20" width="1.25" height="0.75" fill="#569cd6"/><rect x="3.75" y="100.20" width="1.88" height="0.75" fill="#9cdcfe"/><rect x="6.25" y="100.20" width="1.88" height="0.75" fill="#d4d4d4"/><rect x="8.75" y="100.20" width="0.62" height="0.75" fill="#ce9178"/><rect x="10.00" y="100.20" width="0.62" height="0.75" fill="#da70d6"/><rect x="3.75" y="101.45" width="7.50" height="0.75" fill="#9cdcfe"/><rect x="11.88" y="101.45" width="0.62" height="0.75" fill="#d4d4d4"/><rect x="13.12" y="101.45" width="6.88" height="0.75" fill="#9cdcfe"/><rect x="20.62" y="101.45" width="0.62" height="0.75" fill="#d4d4d4"/><rect x="21.88" y="101.45" width="0.62" height="0.75" fill="#b5cea8"/><rect x="23.12" y="101.45" width="0.62" height="0.75" fill="#d4d4d4"/><rect x="24.38" y="101.45" width="1.88" height="0.75" fill="#b5cea8"/><rect x="26.88" y="101.45" width="0.62" height="0.75" fill="#d4d4d4"/><rect x="28.12" y="101.45" width="3.12" height="0.75" fill="#b5cea8"/><rect x="1.88" y="102.70" width="0.62" height="0.75" fill="#da70d6"/><rect x="0.00" y="103.95" width="0.62" height="0.75" fill="#ffd700"/><rect x="0.00" y="106.45" width="5.00" height="0.75" fill="#569cd6"/><rect x="5.62" y="106.45" width="8.12" height="0.75" fill="#dcdcaa"/><rect x="14.38" y="106.45" width="0.62" height="0.75" fill="#ffd700"/><rect x="1.88" y="107.70" width="1.88" height="0.75" fill="#569cd6"/><rect x="4.38" y="107.70" width="2.50" height="0.75" fill="#569cd6"/><rect x="7.50" y="107.70" width="0.62" height="0.75" fill="#9cdcfe"/><rect x="8.75" y="107.70" width="1.25" height="0.75" fill="#569cd6"/><rect x="10.62" y="107.70" width="5.00" height="0.75" fill="#9cdcfe"/><rect x="16.25" y="107.70" width="0.62" height="0.75" fill="#da70d6"/><rect x="3.75" y="108.95" width="0.62" height="0.75" fill="#9cdcfe"/><rect x="5.00" y="108.95" width="0.62" height="0.75" fill="#d4d4d4"/><rect x="6.25" y="108.95" width="0.62" height="0.75" fill="#d4d4d4"/><rect x="7.50" y="108.95" width="3.75" height="0.75" fill="#dcdcaa"/><rect x="11.88" y="108.95" width="3.12" height="0.75" fill="#9cdcfe"/><rect x="3.75" y="110.20" width="0.62" height="0.75" fill="#9cdcfe"/><rect x="5.00" y="110.20" width="0.62" height="0.75" fill="#d4d4d4"/><rect x="6.25" y="110.20" width="0.62" height="0.75" fill="#d4d4d4"/><rect x="7.50" y="110.20" width="3.75" height="0.75" fill="#dcdcaa"/><rect x="11.88" y="110.20" width="3.75" height="0.75" fill="#9cdcfe"/><rect x="3.75" y="111.45" width="0.62" height="0.75" fill="#9cdcfe"/><rect x="5.00" y="111.45" width="3.12" height="0.75" fill="#d4d4d4"/><rect x="8.75" y="111.45" width="0.62" height="0.75" fill="#d4d4d4"/><rect x="10.00" y="111.45" width="3.75" height="0.75" fill="#dcdcaa"/><rect x="14.38" y="111.45" width="3.75" height="0.75" fill="#9cdcfe"/><rect x="18.75" y="111.45" width="7.50" height="0.75" fill="#9cdcfe"/><rect x="26.88" y="111.45" width="3.75" height="0.75" fill="#9cdcfe"/><rect x="1.88" y="112.70" width="0.62" height="0.75" fill="#da70d6"/><rect x="1.88" y="113.95" width="9.38" height="0.75" fill="#9cdcfe"/><rect x="11.88" y="113.95" width="0.62" height="0.75" fill="#d4d4d4"/><rect x="13.12" y="113.95" width="3.75" height="0.75" fill="#dcdcaa"/><rect x="17.50" y="113.95" width="3.75" height="0.75" fill="#9cdcfe"/><rect x="21.88" y="113.95" width="5.62" height="0.75" fill="#9cdcfe"/><rect x="0.00" y="115.20" width="0.62" height="0.75" fill="#ffd700"/><rect x="0.00" y="117.70" width="5.00" height="0.75" fill="#569cd6"/><rect x="5.62" y="117.70" width="6.88" height="0.75" fill="#dcdcaa"/><rect x="13.12" y="117.70" width="0.62" height="0.75" fill="#ffd700"/><rect x="1.88" y="118.95" width="5.62" height="0.75" fill="#dcdcaa"/><rect x="8.12" y="118.95" width="4.38" height="0.75" fill="#9cdcfe"/><rect x="1.88" y="120.20" width="2.50" height="0.75" fill="#dcdcaa"/><rect x="5.00" y="120.20" width="2.50" height="0.75" fill="#9cdcfe"/><rect x="1.88" y="121.45" width="3.75" height="0.75" fill="#dcdcaa"/><rect x="6.25" y="121.45" width="5.00" height="0.75" fill="#9cdcfe"/><rect x="11.88" y="121.45" width="6.25" height="0.75" fill="#9cdcfe"/><rect x="18.75" y="121.45" width="2.50" height="0.75" fill="#b5cea8"/><rect x="1.88" y="122.70" width="6.25" height="0.75" fill="#dcdcaa"/><rect x="8.75" y="122.70" width="0.62" height="0.75" fill="#da70d6"/><rect x="0.00" y="123.95" width="0.62" height="0.75" fill="#ffd700"/><rect x="0.00" y="127.70" width="1.25" height="0.75" fill="#6a9955"/><rect x="1.88" y="127.70" width="12.50" height="0.75" fill="#6a9955"/><rect x="15.00" y="127.70" width="3.75" height="0.75" fill="#6a9955"/><rect x="19.38" y="127.70" width="3.12" height="0.75" fill="#6a9955"/><rect x="23.12" y="127.70" width="2.50" height="0.75" fill="#6a9955"/></svg>
<div class="a" style="left:652.8px;top:40.2px;width:8.6px;height:170px;background:#3b3c3e"></div>
<div class="a" style="left:652px;top:24.7px;width:1px;height:554px;background:#1b1c1f"></div>

<!-- ===== right: preview ===== -->
<div class="tab" style="left:665.8px;top:4.1px;width:67.1px;height:15.3px"></div>
<svg style="left:669.8px;top:8.5px" width="7.2" height="7.2" viewBox="0 0 10 10"><circle cx="5" cy="5" r="4.8" fill="#1d9be6"/><path d="M0.6 5h8.8M5 0.6c-2 1.4-2 7.4 0 8.8M5 0.6c2 1.4 2 7.4 0 8.8" fill="none" stroke="#0d4a78" stroke-width="0.9"/></svg>
<div class="t" style="left:680.80px;top:6.00px;font-size:8.3px;transform:scaleX(0.893);color:#f0f3f6;font-weight:bold">Untitled</div>
<svg class="ic" style="left:722.5px;top:10px;stroke-width:0.85;stroke-linecap:butt" width="4.2" height="4.2" viewBox="0 0 4 4"><path d="M0 0l4 4M4 0L0 4"/></svg>
<svg class="ic" style="left:742.3px;top:9.3px;stroke:#c3c9d0;stroke-width:1.5" width="6.4" height="6.2" viewBox="0 0 8 9" preserveAspectRatio="none"><path d="M1.4 0.6v2.6M1.4 5.4v3M4 0.6v4M4 6.8v1.6M6.6 0.6v1.4M6.6 4.2v4.2M0.4 5.2h2M3 4.6h2M5.6 2h2"/></svg>
<div class="t" style="left:754.30px;top:6.00px;font-size:8.7px;transform:scaleX(0.935);color:#b9c0c8">Settings</div>
<svg style="left:1189px;top:9.8px" width="1.8" height="7.6" viewBox="0 0 2 7.6" preserveAspectRatio="none"><circle cx="1" cy="0.9" r="0.8" fill="#c9cfd6"/><circle cx="1" cy="3.8" r="0.8" fill="#c9cfd6"/><circle cx="1" cy="6.7" r="0.8" fill="#c9cfd6"/></svg>

<div class="panel" style="left:665.3px;top:23.4px;width:531.4px;height:416.5px"></div>
<div class="a" style="left:666.3px;top:43.3px;width:529.4px;height:1px;background:#25272b"></div>
<svg class="ic" style="left:674px;top:31.9px;stroke-width:1.05" width="7" height="5.2" viewBox="0 0 7 6"><path d="M6.6 3H0.6M3 0.6L0.6 3 3 5.4"/></svg>
<svg class="ic" style="left:690.1px;top:31.9px;stroke-width:1.05" width="7" height="5.2" viewBox="0 0 7 6"><path d="M0.4 3h6M4 0.6L6.4 3 4 5.4"/></svg>
<svg style="left:706.3px;top:30.9px" width="6.8" height="7" viewBox="0 0 7 8.5" preserveAspectRatio="none"><path d="M0.3 0.3L6.8 4.25 0.3 8.2z" fill="#1f87f2"/></svg>
<div class="a" style="left:722.1px;top:30.9px;width:6.7px;height:6.7px;background:#b9c7d0;border-radius:1px"></div>
<div class="t" style="left:737.60px;top:28.00px;font-size:8.7px;transform:scaleX(0.958);color:#dfe3e8">/index.html</div>
<svg class="ic" style="left:1129.9px;top:31.3px;stroke-width:1" width="6.3" height="6.3" viewBox="0 0 6 6"><path d="M0 0l6 6M6 0L0 6"/></svg>
<svg class="ic" style="left:1147.1px;top:30.7px;stroke:#a9b7c2;stroke-width:1.05" width="8.8" height="8" viewBox="0 0 9 9"><path d="M1.6 6.8A3.9 3.9 0 1 1 7.4 6.8M2.9 5.6a2.1 2.1 0 1 1 3.2 0M4.5 4.2L3 8.6M4.5 4.2L6 8.6"/></svg>
<svg class="ic" style="left:1162.9px;top:30.2px;stroke:#a9b7c2;stroke-width:1.05" width="9.1" height="8.5" viewBox="0 0 9 9"><rect x="2.6" y="0.6" width="5.8" height="5.4" rx="1"/><path d="M6 8.4H1.6a1 1 0 0 1-1-1V3M3 4.6l1.6-1.4 1.4 1.2 1-.8 1.4 1"/></svg>
<svg class="ic" style="left:1180px;top:30.2px;stroke:#a9b7c2;stroke-width:1.05" width="7.5" height="8.5" viewBox="0 0 8 9"><path d="M4.8 0.6H1.6a1 1 0 0 0-1 1v5.8a1 1 0 0 0 1 1h4.6a1 1 0 0 0 1-1V3z M4.8 0.6V3h2.4 M4 4.2v2.8 M2.8 5.8L4 7l1.2-1.2"/></svg>
<svg style="left:782.7px;top:44.2px" width="295.4" height="393.7" viewBox="0 0 296 394" preserveAspectRatio="none"><defs><clipPath id="artc"><rect width="296" height="394"/></clipPath></defs><g clip-path="url(#artc)"><rect width="296" height="394" fill="#427e63"/>
<path fill="#1993bf" d="M0.0 0.0L11.2 0.0L6.9 17.4L0.0 42.1Z"/>
<path fill="#2b6255" d="M0.0 42.1C1.2 33.8 5.1 24.4 6.9 17.4C8.8 10.3 9.3 2.9 11.2 0.0C13.0 -2.9 17.2 -2.5 17.8 0.0C18.5 2.5 15.0 10.3 14.9 14.9C14.8 19.4 15.3 24.0 17.4 27.3C19.4 30.6 24.0 32.0 27.3 34.7C30.6 37.4 34.7 40.3 37.2 43.4C39.7 46.5 41.7 50.2 42.1 53.3C42.6 56.4 41.7 61.3 39.7 62.0C37.6 62.7 33.1 58.4 29.7 57.5C26.4 56.6 23.1 56.0 19.8 56.5C16.5 57.1 13.2 58.9 9.9 60.7C6.6 62.6 1.7 70.5 0.0 67.4C-1.7 64.3 -1.2 50.5 0.0 42.1Z"/>
<path fill="#1993bf" d="M14.9 2.5C16.6 0.4 21.7 -0.6 24.8 -1.2C27.9 -1.9 31.2 -3.7 33.5 -1.2C35.7 1.2 37.4 8.7 38.4 13.6C39.5 18.6 40.1 24.6 39.7 28.5C39.2 32.4 38.2 35.4 35.9 37.2C33.7 38.9 28.8 39.5 26.0 38.9C23.3 38.3 21.1 36.2 19.3 33.5C17.6 30.7 16.2 26.0 15.4 22.3C14.5 18.6 14.5 14.5 14.4 11.2C14.3 7.8 13.1 4.5 14.9 2.5Z"/>
<path fill="#4a6089" d="M18.6 3.7C19.9 2.2 22.6 1.8 24.8 2.0C27.0 2.2 29.7 2.8 31.7 5.0C33.7 7.1 35.7 11.2 36.7 14.9C37.7 18.6 38.1 23.9 37.7 27.3C37.3 30.7 35.9 33.6 34.2 35.2C32.5 36.8 29.3 37.3 27.3 36.7C25.2 36.1 23.4 34.1 21.8 31.7C20.2 29.3 18.7 25.7 17.8 22.3C17.0 18.9 16.7 14.3 16.9 11.2C17.0 8.1 17.3 5.2 18.6 3.7Z"/>
<ellipse fill="#1993bf" cx="28.0" cy="12.2" rx="4.2" ry="11.4" transform="rotate(0 28.0 12.2)"/>
<path fill="#1993bf" d="M47.1 71.9C48.0 69.5 50.4 68.6 53.3 67.4C56.2 66.3 60.1 65.1 64.5 64.9C68.8 64.8 75.2 65.1 79.3 66.4C83.5 67.8 88.2 71.8 89.2 73.1C90.3 74.5 90.5 70.6 85.5 74.4C80.6 78.1 62.2 90.9 59.5 95.4C56.8 100.0 65.3 99.7 69.4 101.6C73.5 103.6 77.7 105.8 84.3 107.1C90.9 108.4 100.8 109.7 109.1 109.6C117.3 109.4 126.4 108.0 133.9 106.1C141.3 104.2 149.1 99.1 153.7 97.9C158.2 96.8 163.6 97.2 161.1 99.2C158.7 101.1 147.5 107.2 138.8 109.6C130.1 111.9 118.6 113.1 109.1 113.3C99.6 113.5 89.2 112.3 81.8 110.8C74.4 109.4 69.3 107.4 64.5 104.6C59.6 101.8 55.4 98.0 52.6 94.2C49.7 90.4 48.5 85.5 47.6 81.8C46.7 78.1 46.1 74.3 47.1 71.9Z"/>
<path fill="#e8b02d" d="M54.0 81.8C53.7 77.8 55.2 74.8 57.0 72.4C58.8 70.0 61.6 68.3 64.9 67.4C68.3 66.5 73.1 66.2 76.8 66.9C80.6 67.7 85.8 70.4 87.3 71.9C88.7 73.3 87.7 75.6 85.5 75.6C83.4 75.6 77.8 72.4 74.4 71.9C70.9 71.4 67.2 71.6 64.9 72.4C62.7 73.2 61.9 74.9 61.0 76.8C60.1 78.8 59.2 81.2 59.5 84.3C59.7 87.4 62.6 93.5 62.5 95.4C62.4 97.4 60.4 98.5 59.0 96.2C57.6 93.9 54.4 85.8 54.0 81.8Z"/>
<path fill="#1993bf" d="M123.9 -1.2C125.0 -7.2 131.9 -5.6 133.9 -1.2C135.8 3.1 134.2 17.1 135.8 24.8C137.5 32.4 140.0 39.5 143.8 44.6C147.6 49.8 153.7 53.1 158.7 55.8C163.6 58.5 167.7 60.1 173.5 60.7C179.3 61.4 188.0 60.7 193.4 59.5C198.7 58.3 202.9 55.6 205.8 53.3C208.6 51.0 207.6 44.4 210.7 45.9C213.8 47.3 222.9 56.7 224.3 62.0C225.8 67.2 222.9 73.1 219.4 77.3C215.9 81.6 210.1 84.0 203.3 87.3C196.5 90.6 187.6 94.2 178.5 97.2C169.4 100.2 155.3 103.4 148.7 105.4C142.1 107.3 138.8 110.1 138.8 109.1C138.8 108.0 149.6 103.7 148.7 99.2C147.9 94.6 136.5 89.4 133.9 81.8C131.2 74.2 133.7 61.1 132.6 53.3C131.6 45.4 129.1 43.8 127.7 34.7C126.2 25.6 122.9 4.8 123.9 -1.2Z"/>
<path fill="#e8b02d" d="M133.9 64.9C136.3 61.8 143.0 61.0 148.7 60.7C154.5 60.4 162.0 62.3 168.6 63.2C175.2 64.2 184.2 65.0 188.4 66.4C192.6 67.9 193.9 69.3 193.9 71.9C193.9 74.5 191.8 78.9 188.4 81.8C185.0 84.7 178.5 87.1 173.5 89.2C168.6 91.4 162.8 93.0 158.7 94.7C154.5 96.3 152.0 99.2 148.7 99.2C145.4 99.1 141.3 97.5 138.8 94.2C136.3 90.9 134.7 84.2 133.9 79.3C133.0 74.5 131.4 68.0 133.9 64.9Z"/>
<path fill="#4a6089" d="M37.2 -1.2C42.9 -3.1 66.3 -3.1 71.9 -1.2C77.5 0.6 70.2 6.4 70.6 9.9C71.1 13.4 71.7 17.4 74.4 19.8C77.1 22.3 82.6 24.2 86.8 24.8C90.9 25.4 97.0 23.1 99.2 23.5C101.3 24.0 102.5 27.0 99.7 27.8C96.8 28.5 86.8 28.5 81.8 28.3C76.8 28.0 74.0 26.9 69.4 26.3C64.9 25.7 58.9 25.7 54.5 24.8C50.2 23.9 46.2 23.5 43.4 21.1C40.6 18.6 38.7 13.6 37.7 9.9C36.6 6.2 31.5 0.6 37.2 -1.2Z"/>
<path fill="none" stroke="#e8b02d" stroke-width="2.2" stroke-linecap="round" d="M34.5 -1.2C34.6 0.2 34.8 4.7 35.4 7.4C36.1 10.2 37.1 13.0 38.4 15.4C39.8 17.8 42.8 20.7 43.6 21.8"/>
<circle fill="#427e63" cx="85.5" cy="11.9" r="14.4"/>
<path fill="#464545" d="M99.2 -1.2C102.8 -3.1 118.1 -3.9 122.0 -1.2C125.8 1.4 123.3 10.0 122.5 14.9C121.6 19.7 120.1 24.8 117.0 27.8C113.9 30.7 108.1 32.3 104.1 32.7C100.1 33.1 95.4 31.5 93.0 30.2C90.6 29.0 88.9 27.0 89.7 25.3C90.6 23.5 96.1 22.4 97.9 19.8C99.7 17.3 100.2 13.4 100.4 9.9C100.6 6.4 95.6 0.6 99.2 -1.2Z"/>
<path fill="none" stroke="#ec5b22" stroke-width="3.7" stroke-linecap="round" d="M89.7 26.8C90.9 27.6 94.1 30.5 96.7 31.7C99.3 33.0 102.0 34.5 105.4 34.2C108.7 33.9 113.9 32.9 117.0 29.7C120.1 26.6 122.5 20.5 123.7 15.4C124.9 10.2 123.9 1.5 123.9 -1.2"/>
<path fill="#4a6089" d="M74.4 28.5C77.3 27.6 84.3 30.4 89.2 31.7C94.2 33.0 99.1 36.3 104.1 36.2C109.2 36.1 115.9 34.1 119.5 31.0C123.0 27.8 124.4 22.5 125.4 17.4C126.5 12.2 125.3 2.9 125.9 0.0C126.6 -2.9 128.7 -3.3 129.4 0.0C130.1 3.3 130.4 14.0 130.4 19.8C130.4 25.6 128.8 30.2 129.4 34.7C130.0 39.2 134.8 45.4 133.9 47.1C133.0 48.8 128.1 45.7 123.9 44.6C119.8 43.6 113.6 40.9 109.1 40.9C104.5 40.9 100.4 42.6 96.7 44.6C93.0 46.7 89.2 50.8 86.8 53.3C84.3 55.8 83.9 60.1 81.8 59.5C79.7 58.9 76.0 53.3 74.4 49.6C72.7 45.9 71.9 40.7 71.9 37.2C71.9 33.7 71.5 29.4 74.4 28.5Z"/>
<path fill="#464545" d="M59.0 36.7C60.3 35.1 62.2 35.0 63.5 36.7C64.7 38.4 64.6 43.5 66.4 47.1C68.3 50.7 71.4 55.3 74.4 58.3C77.3 61.2 82.4 62.8 84.3 64.9C86.2 67.1 87.4 71.2 85.8 71.4C84.1 71.6 78.3 68.5 74.4 65.9C70.4 63.4 65.1 59.3 62.0 56.0C58.9 52.7 56.3 49.3 55.8 46.1C55.3 42.9 57.7 38.3 59.0 36.7Z"/>
<path fill="#ec5b22" d="M65.7 28.0C67.8 26.3 73.7 25.2 74.9 26.8C76.0 28.3 72.4 33.4 72.4 37.2C72.4 41.0 73.0 45.7 74.9 49.6C76.7 53.5 81.6 57.9 83.3 60.5C84.9 63.0 86.3 65.3 84.8 64.9C83.3 64.6 77.5 61.5 74.4 58.5C71.2 55.5 67.9 50.7 65.9 47.1C64.0 43.5 62.5 40.4 62.5 37.2C62.4 34.0 63.6 29.7 65.7 28.0Z"/>
<circle fill="#4a6089" cx="109.1" cy="60.7" r="24.5"/>
<path fill="#4a6089" d="M60.7 72.4C63.4 69.9 70.0 69.5 74.4 69.9C78.7 70.3 82.6 73.0 86.8 74.9C90.9 76.7 94.2 79.6 99.2 80.8C104.1 82.1 110.7 82.9 116.5 82.3C122.3 81.7 128.9 78.0 133.9 77.3C138.8 76.7 142.7 76.9 146.3 78.3C149.8 79.7 154.1 82.7 154.9 85.8C155.8 88.8 154.7 93.6 151.2 96.7C147.7 99.7 140.9 102.2 133.9 104.1C126.8 106.0 117.3 107.8 109.1 108.1C100.8 108.3 91.3 107.4 84.3 105.6C77.3 103.8 71.2 100.6 66.9 97.2C62.6 93.7 59.5 88.9 58.5 84.8C57.5 80.6 58.1 74.9 60.7 72.4Z"/>
<path fill="none" stroke="#e8b02d" stroke-width="1.0" stroke-linecap="round" d="M85.5 71.4C87.8 72.8 94.0 78.3 99.2 80.1C104.3 81.8 110.7 82.5 116.5 82.1C122.3 81.6 130.1 78.7 133.9 77.1C137.7 75.5 138.4 73.2 139.3 72.4"/>
<path fill="none" stroke="#ec5b22" stroke-width="3.7" stroke-linecap="round" d="M125.4 -1.4C125.4 2.9 125.2 17.6 125.4 24.6C125.7 31.6 126.3 36.1 127.2 40.7C128.1 45.2 130.3 50.0 130.9 51.8"/>
<path fill="#ec5b22" d="M131.6 -1.2C136.2 -5.8 154.1 -5.6 161.1 -1.2C168.1 3.1 168.6 19.2 173.5 24.8C178.5 30.4 185.7 32.2 190.9 32.2C196.0 32.2 201.6 30.4 204.5 24.8C207.4 19.2 206.8 3.1 208.2 -1.2C209.7 -5.6 212.4 -5.4 213.2 -1.2C214.0 2.9 214.3 15.8 213.2 23.5C212.0 31.3 209.8 39.5 206.2 45.1C202.7 50.7 197.3 54.5 191.9 57.3C186.4 60.1 179.4 62.0 173.5 62.0C167.7 61.9 162.2 59.8 156.9 57.0C151.7 54.2 145.9 50.2 142.0 45.1C138.2 40.0 135.6 34.0 133.9 26.3C132.1 18.6 127.1 3.3 131.6 -1.2Z"/>
<path fill="#464545" d="M135.6 -1.2C139.4 -5.6 157.3 -3.1 161.1 -1.2C165.0 0.6 158.2 5.6 158.7 9.9C159.1 14.3 160.7 20.9 163.6 24.8C166.5 28.7 171.5 32.2 176.0 33.5C180.5 34.7 186.3 33.7 190.9 32.2C195.4 30.8 200.6 27.7 203.3 24.8C206.0 21.9 206.2 19.2 207.0 14.9C207.7 10.5 207.2 1.4 207.7 -1.2C208.3 -3.9 209.9 -5.2 210.2 -1.2C210.5 2.7 210.9 15.1 209.7 22.3C208.6 29.5 206.5 37.0 203.3 42.1C200.0 47.3 195.3 50.7 190.4 53.3C185.4 55.9 178.7 58.0 173.5 58.0C168.3 58.0 163.8 55.7 159.1 53.0C154.5 50.4 149.3 46.9 145.8 42.1C142.2 37.4 139.8 32.0 138.1 24.8C136.4 17.6 131.8 3.1 135.6 -1.2Z"/>
<path fill="#464545" d="M159.9 -1.2C168.3 -3.1 200.8 -3.9 208.7 -1.2C216.7 1.4 208.6 10.5 207.7 14.9C206.9 19.3 206.6 22.3 203.8 25.3C201.0 28.3 195.6 31.5 190.9 33.0C186.2 34.4 180.1 35.2 175.5 34.0C170.9 32.7 166.0 29.3 163.1 25.3C160.2 21.3 158.7 14.3 158.2 9.9C157.6 5.5 151.5 0.6 159.9 -1.2Z"/>
<path fill="#4a6089" d="M161.1 -1.2C163.6 -3.1 171.9 -3.1 173.5 -1.2C175.2 0.6 171.0 5.6 171.0 9.9C171.0 14.3 172.5 21.0 173.5 24.8C174.6 28.6 177.9 31.6 177.5 32.7C177.1 33.8 173.4 32.6 171.0 31.2C168.7 29.9 165.7 28.3 163.6 24.8C161.5 21.2 159.1 14.3 158.7 9.9C158.2 5.6 158.7 0.6 161.1 -1.2Z"/>
<circle fill="#2b6255" cx="189.6" cy="16.1" r="16.9"/>
<path fill="#4a6089" d="M209.0 -1.7C210.8 -6.4 218.3 -7.2 220.8 -1.7C223.2 3.7 221.8 23.6 223.7 30.9C225.7 38.1 229.7 38.3 232.6 41.7C235.6 45.2 240.0 48.5 241.5 51.6C243.1 54.7 242.8 57.5 242.0 60.5C241.2 63.5 240.0 66.4 236.6 69.4C233.2 72.4 227.5 75.3 221.8 78.3C216.0 81.3 209.4 84.2 202.0 87.2C194.6 90.2 186.4 93.3 177.3 96.3C168.2 99.2 152.6 103.9 147.7 105.0C142.7 106.1 142.7 105.3 147.7 103.0C152.6 100.7 169.1 94.4 177.3 91.1C185.5 87.8 192.0 86.2 197.1 83.2C202.2 80.3 205.6 77.1 207.9 73.3C210.2 69.6 210.6 65.1 210.9 60.5C211.2 55.9 210.1 51.4 209.9 45.7C209.7 39.9 210.1 33.8 209.9 25.9C209.8 18.0 207.2 2.9 209.0 -1.7Z"/>
<path fill="#464545" d="M242.0 51.6C242.8 50.3 245.9 51.0 246.5 52.6C247.0 54.2 246.8 58.4 245.5 61.5C244.2 64.6 242.4 68.2 238.6 71.4C234.8 74.5 228.8 77.3 222.8 80.3C216.7 83.2 209.6 86.3 202.0 89.2C194.4 92.0 186.4 94.7 177.3 97.6C168.2 100.4 152.6 104.9 147.7 106.2C142.7 107.4 142.7 106.6 147.7 105.0C152.6 103.3 168.2 99.2 177.3 96.3C186.4 93.3 194.6 90.2 202.0 87.2C209.4 84.2 216.0 81.3 221.8 78.3C227.5 75.3 233.2 72.4 236.6 69.4C240.0 66.4 241.1 63.5 242.0 60.5C242.9 57.5 241.3 52.9 242.0 51.6Z"/>
<path fill="#464545" d="M263.3 -1.7C265.2 -6.4 272.9 -6.4 274.6 -1.7C276.4 2.9 274.2 18.0 273.6 25.9C273.1 33.8 271.7 39.1 271.2 45.7C270.6 52.3 271.3 60.5 270.2 65.4C269.0 70.4 267.2 72.7 264.3 75.3C261.3 78.0 257.7 79.8 252.4 81.3C247.1 82.7 240.2 82.8 232.6 84.2C225.1 85.6 216.2 87.2 206.9 89.7C197.7 92.1 187.2 96.2 177.3 99.0C167.4 101.9 147.7 107.1 147.7 106.9C147.7 106.8 168.2 100.9 177.3 98.1C186.4 95.2 194.6 92.3 202.0 89.7C209.4 87.0 216.0 84.3 221.8 82.2C227.5 80.2 232.1 79.3 236.6 77.3C241.0 75.3 245.5 73.0 248.4 70.4C251.4 67.7 252.9 65.0 254.4 61.5C255.9 58.0 256.5 52.9 257.3 49.6C258.2 46.3 258.3 45.7 259.3 41.7C260.3 37.8 262.6 33.2 263.3 25.9C263.9 18.7 261.4 2.9 263.3 -1.7Z"/>
<path fill="#1993bf" d="M256.4 48.2C257.5 48.0 257.9 47.4 257.5 49.6C257.2 51.9 255.9 58.0 254.4 61.5C252.9 65.0 251.4 67.7 248.4 70.4C245.5 73.0 241.0 75.3 236.6 77.3C232.1 79.3 227.5 80.2 221.8 82.2C216.0 84.3 209.4 87.0 202.0 89.7C194.6 92.3 186.4 95.2 177.3 98.1C168.2 100.9 152.6 105.2 147.7 106.6C142.7 107.9 142.7 107.5 147.7 106.0C152.6 104.5 168.2 100.4 177.3 97.6C186.4 94.8 194.4 92.0 202.0 89.2C209.6 86.3 216.7 83.2 222.8 80.3C228.8 77.3 234.8 74.5 238.6 71.4C242.4 68.2 244.1 64.6 245.5 61.5C246.9 58.4 246.1 54.4 247.0 52.6C247.9 50.8 249.4 51.4 250.9 50.6C252.5 49.9 255.2 48.3 256.4 48.2Z"/>
<path fill="#2b6255" d="M266.2 50.6C267.1 46.7 267.2 43.2 268.2 39.8C269.2 36.3 271.6 28.9 272.2 29.9C272.7 30.9 272.0 39.8 271.7 45.7C271.3 51.6 271.4 60.5 270.2 65.4C269.0 70.4 267.2 72.7 264.3 75.3C261.3 78.0 257.7 79.8 252.4 81.3C247.1 82.7 240.2 82.8 232.6 84.2C225.1 85.6 216.2 87.2 206.9 89.7C197.7 92.1 178.1 99.0 177.3 99.0C176.5 99.1 194.1 92.8 202.0 90.1C209.9 87.5 217.6 85.0 224.7 83.2C231.8 81.4 239.2 80.9 244.5 79.3C249.8 77.6 253.2 76.0 256.4 73.3C259.5 70.7 261.6 67.3 263.3 63.5C264.9 59.7 265.4 54.6 266.2 50.6Z"/>
<path fill="#ec5b22" d="M273.6 -1.7C273.9 -6.4 275.0 -6.4 275.3 -1.7C275.7 2.9 275.6 18.0 275.7 25.9C275.9 33.8 275.8 39.1 276.3 45.7C276.9 52.3 278.5 60.2 279.1 65.4C279.7 70.7 280.6 73.7 280.1 77.3C279.6 80.9 278.4 84.9 276.1 87.2C273.8 89.5 271.2 90.7 266.2 91.1C261.3 91.6 253.4 90.4 246.5 89.9C239.6 89.3 232.1 87.6 224.7 87.9C217.3 88.1 207.4 90.4 202.0 91.3C196.6 92.3 191.3 93.9 192.1 93.6C192.9 93.3 200.2 91.2 206.9 89.7C213.7 88.1 225.1 85.6 232.6 84.2C240.2 82.8 247.1 82.7 252.4 81.3C257.7 79.8 261.3 78.0 264.3 75.3C267.2 72.7 269.0 70.4 270.2 65.4C271.4 60.5 271.3 51.6 271.7 45.7C272.1 39.8 272.3 33.2 272.7 29.9C273.0 26.6 273.5 31.2 273.6 25.9C273.8 20.6 273.4 2.9 273.6 -1.7Z"/>
<circle fill="#464545" cx="244.2" cy="21.8" r="29.0"/>
<circle fill="#1993bf" cx="244.2" cy="21.1" r="23.1"/>
<circle fill="#2b6255" cx="244.2" cy="21.1" r="21.3"/>
<path fill="#2b6255" d="M297.5 66.9C295.9 60.3 290.4 66.9 288.1 69.4C285.7 71.9 284.3 77.7 283.1 81.8C281.9 85.9 280.2 90.5 280.6 94.2C281.0 97.9 282.8 101.6 285.6 104.1C288.4 106.6 295.5 115.3 297.5 109.1C299.5 102.9 299.0 73.5 297.5 66.9Z"/>
<path fill="#464545" d="M26.0 55.0C28.7 55.0 30.7 58.8 33.5 62.0C36.2 65.2 39.7 69.8 42.6 74.4C45.5 78.9 48.8 84.1 50.8 89.2C52.9 94.4 55.2 101.2 55.0 105.4C54.8 109.5 52.6 113.4 49.6 114.0C46.6 114.7 40.9 109.3 37.2 109.1C33.5 108.9 30.0 111.1 27.3 112.8C24.6 114.4 23.8 119.0 21.1 119.0C18.4 119.0 13.8 116.7 11.2 112.8C8.5 108.9 5.2 101.8 5.0 95.4C4.7 89.0 7.4 79.9 9.4 74.4C11.5 68.8 14.6 65.2 17.4 62.0C20.1 58.8 23.3 55.0 26.0 55.0Z"/>
<path fill="#4a6089" d="M23.5 72.4C26.4 70.9 29.1 69.5 32.2 70.6C35.3 71.8 39.2 75.6 42.1 79.3C45.0 83.0 47.8 88.6 49.6 93.0C51.3 97.3 52.8 102.3 52.6 105.4C52.3 108.5 50.9 111.3 48.3 111.6C45.8 111.8 40.9 107.1 37.2 107.1C33.5 107.1 28.7 110.0 26.0 111.6C23.3 113.1 23.0 116.9 21.1 116.5C19.1 116.1 15.8 112.8 14.4 109.1C12.9 105.4 12.2 99.2 12.4 94.2C12.6 89.2 13.5 83.0 15.4 79.3C17.2 75.7 20.7 73.8 23.5 72.4Z"/>
<path fill="#427e63" d="M19.3 92.2C21.3 90.2 26.4 89.1 29.7 89.2C33.1 89.4 37.8 90.9 39.7 93.0C41.5 95.0 41.9 99.0 40.9 101.6C39.9 104.3 36.4 107.6 33.5 109.1C30.6 110.5 26.2 111.6 23.5 110.3C20.9 109.1 18.6 104.7 17.8 101.6C17.1 98.6 17.4 94.3 19.3 92.2Z"/>
<path fill="#e8b02d" d="M25.8 112.8C26.4 110.2 27.8 107.7 30.2 106.1C32.6 104.5 36.0 103.5 40.2 103.4C44.3 103.2 50.5 104.4 55.0 105.4C59.6 106.3 62.3 108.1 67.4 109.1C72.6 110.0 78.8 110.9 86.0 111.1C93.2 111.2 100.6 110.6 110.8 109.8C121.0 109.0 136.8 107.1 147.2 106.3C157.7 105.6 168.2 104.8 173.5 105.1C178.8 105.4 183.1 107.0 179.0 108.1C174.8 109.2 158.0 110.6 148.7 111.6C139.4 112.5 131.6 113.3 123.2 114.0C114.8 114.7 106.7 115.4 98.4 115.8C90.2 116.2 81.5 116.0 73.6 116.5C65.8 117.0 56.9 117.8 51.3 119.0C45.7 120.1 43.1 121.4 40.2 123.5C37.2 125.5 35.0 130.1 33.5 131.4C31.9 132.6 32.1 132.5 31.0 130.9C29.9 129.2 27.6 124.5 26.8 121.5C25.9 118.5 25.2 115.4 25.8 112.8Z"/>
<path fill="#1993bf" d="M26.0 135.1C27.3 131.4 33.3 131.1 37.2 128.9C41.1 126.7 43.4 123.9 49.6 122.0C55.8 120.0 64.0 118.4 74.4 117.0C84.7 115.6 99.2 114.4 111.6 113.5C123.9 112.7 137.5 112.8 148.7 112.0C160.0 111.3 170.7 110.5 179.0 109.1C187.2 107.7 191.0 104.2 198.3 103.6C205.7 103.0 214.8 103.2 223.1 105.4C231.4 107.5 240.0 111.3 247.9 116.5C255.7 121.7 264.6 130.6 270.2 136.3C275.8 142.1 283.0 148.7 281.4 151.2C279.7 153.7 265.9 154.7 260.3 151.2C254.7 147.7 254.1 135.7 247.9 130.1C241.7 124.6 231.4 120.5 223.1 117.7C214.8 115.0 206.6 113.7 198.3 113.5C190.1 113.3 181.8 115.6 173.5 116.5C165.3 117.4 154.5 117.7 148.7 119.0C143.0 120.2 141.3 121.9 138.8 123.9C136.3 126.0 134.5 126.8 133.9 131.4C133.2 135.9 152.5 147.9 135.1 151.2C117.7 154.5 47.9 153.9 29.7 151.2C11.6 148.5 24.8 138.8 26.0 135.1Z"/>
<path fill="#4a6089" d="M137.6 119.3C140.3 111.8 150.2 116.5 158.7 115.6C167.1 114.6 177.7 113.2 188.4 113.6C199.1 113.9 213.2 114.1 223.1 117.5C233.0 121.0 241.3 126.6 247.9 134.2C254.5 141.7 259.7 153.8 262.8 162.7C265.9 171.5 267.3 180.0 266.5 187.5C265.7 194.9 262.6 204.0 257.8 207.3C253.1 210.6 245.4 208.1 238.0 207.3C230.5 206.5 221.5 202.7 213.2 202.3C204.9 201.9 196.7 203.8 188.4 204.8C180.1 205.8 171.9 205.6 163.6 208.5C155.3 211.4 145.4 218.2 138.8 222.2C132.2 226.1 127.7 232.1 123.9 232.1C120.2 232.1 115.7 226.7 116.5 222.2C117.3 217.6 125.2 211.0 128.9 204.8C132.6 198.6 136.5 192.4 138.8 185.0C141.1 177.5 142.7 171.1 142.5 160.2C142.3 149.2 134.9 126.7 137.6 119.3Z"/>
<path fill="none" stroke="#2b6255" stroke-width="7.7" stroke-linecap="round" d="M165.9 128.9C171.1 128.6 187.6 126.8 196.9 126.8C206.2 126.9 214.0 127.2 221.6 129.3C229.3 131.5 237.6 135.8 242.7 139.7C247.9 143.7 251.0 150.9 252.6 153.1"/>
<path fill="none" stroke="#1993bf" stroke-width="4.5" stroke-linecap="round" d="M141.1 129.8C148.3 128.5 171.1 123.0 184.5 121.8C197.9 120.5 211.7 120.6 221.6 122.4C231.6 124.1 237.8 128.0 244.0 132.3C250.2 136.6 255.3 143.4 258.8 148.1C262.3 152.9 264.0 158.5 265.0 160.5"/>
<path fill="#2b6255" d="M194.4 111.0C194.4 109.9 203.7 108.8 209.3 109.1C214.8 109.4 221.6 109.8 227.8 112.8C234.0 115.8 242.7 123.8 246.4 127.1C250.2 130.3 253.5 133.4 250.4 132.3C247.3 131.2 234.7 123.3 227.8 120.5C221.0 117.7 214.8 117.0 209.3 115.4C203.7 113.8 194.4 112.0 194.4 111.0Z"/>
<path fill="#2b6255" d="M218.1 126.7C222.3 126.1 239.2 129.8 247.9 134.2C256.6 138.5 264.8 145.5 270.2 152.7C275.6 160.0 278.9 169.7 280.1 177.5C281.4 185.4 280.5 194.5 277.6 199.8C274.7 205.2 266.5 208.5 262.8 209.8C259.0 211.0 254.3 209.8 255.3 207.3C256.4 204.8 266.4 199.8 269.0 194.9C271.5 189.9 272.1 184.1 270.7 177.5C269.3 170.9 265.1 160.8 260.3 155.2C255.5 149.6 247.9 147.0 241.7 144.1C235.5 141.2 227.0 140.8 223.1 137.9C219.2 135.0 214.0 127.3 218.1 126.7Z"/>
<path fill="#e8b02d" d="M238.0 144.1C240.2 144.1 252.6 150.5 257.8 155.2C263.0 160.0 266.8 167.1 269.0 172.6C271.1 178.0 271.6 183.7 270.7 187.9C269.7 192.2 267.1 196.6 263.3 197.9C259.5 199.1 252.7 196.5 247.9 195.4C243.1 194.3 238.4 191.7 234.3 191.4C230.1 191.1 223.7 194.7 223.1 193.6C222.5 192.6 227.4 188.9 230.5 185.0C233.6 181.0 239.4 175.1 241.7 170.1C244.0 165.1 244.8 159.6 244.2 155.2C243.6 150.9 235.7 144.1 238.0 144.1Z"/>
<path fill="#427e63" d="M152.3 141.6C158.2 139.1 176.0 138.9 184.5 139.1C192.9 139.3 196.9 141.2 203.1 142.8C209.3 144.5 217.5 147.0 221.6 149.0C225.8 151.1 227.8 153.9 227.8 155.2C227.8 156.6 225.8 157.5 221.6 157.1C217.5 156.7 208.6 152.7 203.1 152.8C197.5 152.9 191.9 155.0 188.2 157.7C184.5 160.4 181.4 165.1 180.8 168.9C180.1 172.6 182.2 176.3 184.5 180.0C186.7 183.7 191.7 188.1 194.4 191.2C197.1 194.3 196.9 197.2 200.6 198.6C204.3 200.1 212.4 200.5 216.7 199.8C221.0 199.2 223.7 196.5 226.6 194.9C229.5 193.2 231.1 190.3 234.0 189.9C236.9 189.5 240.6 191.2 244.0 192.4C247.3 193.6 251.4 195.3 253.9 197.4C256.3 199.4 259.0 203.1 258.8 204.8C258.6 206.5 255.1 207.7 252.6 207.3C250.2 206.9 247.1 204.0 244.0 202.3C240.9 200.7 237.8 197.8 234.0 197.4C230.3 197.0 227.4 199.0 221.6 199.8C215.9 200.7 205.5 201.3 199.3 202.3C193.1 203.4 191.1 205.2 184.5 206.0C177.9 206.9 165.9 206.0 159.7 207.3C153.5 208.5 149.8 215.1 147.3 213.5C144.8 211.8 143.8 202.1 144.8 197.4C145.9 192.6 152.6 190.1 153.5 185.0C154.4 179.8 151.2 171.6 150.4 166.4C149.6 161.2 148.2 158.1 148.5 154.0C148.8 149.9 146.3 144.1 152.3 141.6Z"/>
<path fill="#2b6255" d="M158.7 189.4C158.7 185.0 160.5 179.3 163.6 176.3C166.7 173.3 172.5 171.3 177.2 171.3C182.0 171.3 188.8 173.3 192.1 176.3C195.4 179.3 197.1 185.1 197.1 189.4C197.1 193.8 195.4 199.4 192.1 202.3C188.8 205.3 182.0 207.2 177.2 207.3C172.5 207.4 166.7 205.8 163.6 202.8C160.5 199.8 158.7 193.9 158.7 189.4Z"/>
<circle fill="#427e63" cx="177.5" cy="189.4" r="16.4"/>
<circle fill="#4a6089" cx="177.5" cy="188.9" r="9.4"/>
<ellipse fill="#2b6255" cx="153.7" cy="176.3" rx="5.0" ry="8.4" transform="rotate(15 153.7 176.3)"/>
<circle fill="#1993bf" cx="207.7" cy="176.3" r="24.0"/>
<ellipse fill="#e8b02d" cx="212.7" cy="152.7" rx="11.4" ry="3.5" transform="rotate(22 212.7 152.7)"/>
<path fill="#4a6089" d="M48.8 129.2C53.4 124.7 60.0 124.4 74.4 123.0C88.7 121.6 124.0 118.9 135.1 120.5C146.2 122.2 140.2 128.4 140.8 132.9C141.4 137.5 140.0 141.2 138.8 147.8C137.7 154.4 133.9 164.3 133.9 172.6C133.9 180.8 138.8 190.8 138.8 197.4C138.8 204.0 137.6 208.1 133.9 212.2C130.1 216.4 121.5 218.9 116.5 222.2C111.6 225.5 109.5 228.8 104.1 232.1C98.7 235.4 89.2 238.7 84.3 242.0C79.3 245.3 78.5 248.6 74.4 251.9C70.2 255.2 63.6 258.1 59.5 261.8C55.4 265.5 59.7 272.1 49.6 274.2C39.5 276.3 7.2 290.1 -1.2 274.2C-9.7 258.3 -3.4 195.8 -1.2 178.8C0.9 161.8 6.4 173.5 11.7 172.1C16.9 170.6 25.4 171.7 30.2 170.1C35.1 168.5 38.1 166.0 40.9 162.7C43.7 159.4 45.8 155.8 47.1 150.3C48.4 144.7 44.3 133.7 48.8 129.2Z"/>
<path fill="#1993bf" d="M24.1 137.9C28.8 135.9 53.2 136.0 58.8 137.9C64.4 139.7 59.2 146.3 57.5 149.0C55.9 151.8 51.8 154.0 48.9 154.6C46.0 155.2 43.3 153.6 40.2 152.8C37.1 151.9 33.0 152.1 30.3 149.7C27.6 147.2 19.3 139.8 24.1 137.9Z"/>
<path fill="#1993bf" d="M-1.9 166.4C0.3 163.4 6.3 162.5 11.7 161.2C17.1 159.9 25.7 158.7 30.3 158.7C34.8 158.7 37.0 159.5 39.0 161.4C40.9 163.3 41.4 167.2 42.1 170.1C42.7 173.0 43.6 178.1 42.7 178.8C41.7 179.5 38.5 175.6 36.5 174.4C34.4 173.2 34.4 171.9 30.3 171.6C26.1 171.3 17.1 171.3 11.7 172.6C6.3 173.9 0.3 180.4 -1.9 179.4C-4.2 178.4 -4.2 169.4 -1.9 166.4Z"/>
<path fill="none" stroke="#1993bf" stroke-width="1.7" stroke-linecap="round" d="M41.4 176.3C42.7 178.4 46.7 184.8 48.9 188.7C51.0 192.6 52.8 194.3 54.4 199.8C56.1 205.4 58.1 218.1 58.8 221.8"/>
<path fill="none" stroke="#1993bf" stroke-width="2.5" stroke-linecap="round" d="M51.3 141.3C55.1 140.4 65.8 137.3 73.6 136.0C81.5 134.7 90.2 133.9 98.4 133.5C106.7 133.2 116.8 133.5 123.2 134.0C129.6 134.5 134.6 136.0 136.8 136.4"/>
<path fill="#2b6255" d="M72.4 172.6C72.3 169.1 71.8 163.7 73.6 160.2C75.5 156.7 79.4 154.0 83.5 151.5C87.7 149.0 92.8 147.2 98.4 145.3C104.0 143.5 110.8 140.8 117.0 140.4C123.2 139.9 130.4 141.2 135.6 142.8C140.8 144.5 146.1 147.0 148.0 150.3C149.9 153.6 148.8 159.7 146.8 162.7C144.7 165.6 139.5 167.5 135.6 168.1C131.7 168.7 129.4 167.0 123.2 166.4C117.0 165.8 103.8 163.4 98.4 164.4C93.0 165.4 93.5 169.8 91.0 172.6C88.5 175.4 85.6 178.7 83.5 181.3C81.5 183.8 80.1 187.7 78.6 187.7C77.1 187.7 75.4 183.8 74.4 181.3C73.3 178.7 72.5 176.1 72.4 172.6Z"/>
<ellipse fill="#ec5b22" cx="124.4" cy="156.5" rx="23.5" ry="10.7" transform="rotate(-6 124.4 156.5)"/>
<circle fill="#ec5b22" cx="118.5" cy="188.7" r="20.3"/>
<circle fill="#1993bf" cx="128.9" cy="183.7" r="3.7"/>
<circle fill="#427e63" cx="128.9" cy="183.7" r="2.7"/>
<ellipse fill="#2b6255" cx="87.3" cy="208.5" rx="5.9" ry="8.9" transform="rotate(10 87.3 208.5)"/>
<ellipse fill="#1993bf" cx="75.4" cy="209.8" rx="2.2" ry="5.0" transform="rotate(5 75.4 209.8)"/>
<path fill="#e8b02d" d="M57.0 172.1C57.3 169.4 58.6 169.5 59.5 172.1C60.4 174.6 61.0 182.0 62.5 187.5C63.9 192.9 66.2 199.5 68.2 204.8C70.2 210.1 73.9 216.8 74.4 219.2C74.8 221.6 72.9 221.6 70.9 219.2C68.9 216.8 64.7 210.0 62.5 204.8C60.2 199.6 58.4 193.4 57.5 187.9C56.6 182.5 56.7 174.7 57.0 172.1Z"/>
<circle fill="#e8b02d" cx="26.8" cy="217.2" r="19.8"/>
<path fill="#1993bf" d="M62.0 232.1C63.4 228.8 68.8 226.7 71.9 227.1C75.0 227.5 78.9 231.2 80.6 234.6C82.2 237.9 77.9 246.1 81.8 246.9C85.7 247.8 97.9 243.6 104.1 239.5C110.3 235.4 115.7 227.9 119.0 222.2C122.3 216.4 121.9 206.9 123.9 204.8C126.0 202.7 130.6 206.0 131.4 209.8C132.2 213.5 131.4 221.7 128.9 227.1C126.4 232.5 121.5 237.9 116.5 242.0C111.6 246.1 104.5 248.6 99.2 251.9C93.8 255.2 88.4 261.8 84.3 261.8C80.2 261.8 77.9 254.4 74.4 251.9C70.9 249.4 65.3 250.3 63.2 246.9C61.1 243.6 60.5 235.4 62.0 232.1Z"/>
<path fill="#427e63" d="M81.8 251.9C85.9 246.9 93.4 246.5 99.2 244.5C104.9 242.4 111.6 238.3 116.5 239.5C121.5 240.7 125.2 246.1 128.9 251.9C132.6 257.7 147.9 270.5 138.8 274.2C129.7 277.9 83.9 277.9 74.4 274.2C64.9 270.5 77.7 256.9 81.8 251.9Z"/>
<path fill="#e8b02d" d="M119.5 222.7C120.0 220.8 121.7 220.6 122.5 222.2C123.2 223.7 124.0 229.5 123.9 232.1C123.9 234.6 122.7 237.3 122.0 237.5C121.2 237.7 119.9 235.8 119.5 233.3C119.1 230.8 119.0 224.5 119.5 222.7Z"/>
<path fill="#e8b02d" d="M297.5 170.1C296.0 164.3 290.9 170.9 288.8 173.8C286.7 176.7 285.7 182.3 285.1 187.5C284.5 192.6 284.3 201.3 285.1 204.8C285.9 208.3 288.0 207.9 290.0 208.5C292.1 209.1 296.2 214.9 297.5 208.5C298.7 202.1 298.9 175.9 297.5 170.1Z"/>
<ellipse fill="#4a6089" cx="286.3" cy="199.4" rx="4.0" ry="5.5" transform="rotate(0 286.3 199.4)"/>
<path fill="#1993bf" d="M297.5 208.5C296.2 205.0 293.3 209.1 290.0 208.5C286.7 207.9 281.6 204.8 277.6 204.8C273.7 204.8 269.0 205.6 266.5 208.5C264.0 211.4 262.6 217.0 262.8 222.2C263.0 227.3 264.4 237.4 267.7 239.5C271.0 241.6 277.6 236.2 282.6 234.6C287.6 232.9 295.0 233.9 297.5 229.6C300.0 225.3 298.7 212.0 297.5 208.5Z"/>
<path fill="#ec5b22" d="M128.9 222.2C131.2 219.3 141.3 213.0 148.7 209.8C156.2 206.5 164.4 204.4 173.5 202.8C182.6 201.3 193.4 200.2 203.3 200.3C213.2 200.5 225.4 201.0 233.0 203.6C240.7 206.2 245.7 212.0 249.1 216.0C252.6 219.9 253.4 223.8 253.8 227.1C254.3 230.4 253.2 231.9 251.9 235.8C250.5 239.7 248.6 245.7 245.7 250.4C242.8 255.1 237.6 260.2 234.5 264.1C231.4 267.9 228.8 272.3 226.8 273.5C224.8 274.6 222.0 272.9 222.6 271.0C223.2 269.1 227.5 265.4 230.5 261.8C233.6 258.2 238.1 253.9 241.0 249.4C243.8 245.0 246.1 238.8 247.4 235.0C248.7 231.2 249.4 229.3 248.6 226.6C247.9 224.0 246.0 222.0 242.9 219.2C239.9 216.4 237.2 212.0 230.5 209.8C223.9 207.6 212.8 206.3 203.3 206.0C193.8 205.8 182.2 207.0 173.5 208.5C164.8 210.1 157.6 212.1 151.2 215.2C144.8 218.3 138.8 226.0 135.1 227.1C131.4 228.3 126.6 225.0 128.9 222.2Z"/>
<path fill="#2b6255" d="M132.6 225.1C134.7 222.6 144.4 217.1 151.2 214.2C158.0 211.3 164.8 209.3 173.5 207.8C182.2 206.3 193.8 205.1 203.3 205.3C212.8 205.5 223.8 206.7 230.5 209.0C237.2 211.3 240.5 216.2 243.4 219.2C246.4 222.2 247.8 224.3 248.4 227.1C249.0 229.9 248.2 232.0 246.9 235.8C245.6 239.6 243.3 245.5 240.5 249.9C237.6 254.3 232.9 258.8 230.0 262.3C227.2 265.8 225.1 271.1 223.1 271.0C221.1 270.9 217.5 265.8 218.1 261.8C218.8 257.8 226.0 252.3 226.8 246.9C227.6 241.6 226.6 233.7 223.1 229.6C219.6 225.5 212.4 223.8 205.8 222.2C199.1 220.5 191.3 220.5 183.4 219.7C175.6 218.9 166.1 215.5 158.7 217.2C151.2 218.9 143.2 228.3 138.8 229.6C134.5 230.9 130.6 227.7 132.6 225.1Z"/>
<path fill="none" stroke="#4a6089" stroke-width="5.5" stroke-linecap="round" d="M230.5 212.7C232.1 214.3 238.1 218.9 240.0 222.2C241.8 225.4 242.4 227.9 241.7 232.1C241.0 236.2 238.0 242.6 235.5 246.9C233.0 251.3 228.3 256.2 226.8 258.1"/>
<path fill="#427e63" d="M195.8 232.1C198.7 227.7 203.7 225.9 208.2 225.9C212.8 225.9 219.4 228.6 223.1 232.1C226.8 235.6 229.5 239.9 230.5 246.9C231.6 254.0 235.5 269.7 229.3 274.2C223.1 278.8 199.8 277.9 193.4 274.2C187.0 270.5 190.5 258.9 190.9 251.9C191.3 244.9 192.9 236.4 195.8 232.1Z"/>
<path fill="#4a6089" d="M250.4 215.2C251.7 214.2 259.8 218.1 262.8 220.9C265.7 223.7 268.2 227.7 268.2 232.1C268.2 236.4 265.7 242.0 262.8 246.9C259.8 251.9 254.5 257.7 250.4 261.8C246.2 266.0 241.3 270.1 238.0 271.7C234.7 273.4 231.0 273.2 230.5 271.7C230.1 270.3 232.8 266.6 235.5 263.1C238.2 259.5 243.8 255.0 246.7 250.4C249.5 245.9 251.5 239.7 252.9 235.8C254.2 231.9 255.2 230.5 254.8 227.1C254.4 223.7 249.0 216.2 250.4 215.2Z"/>
<circle fill="#4a6089" cx="161.1" cy="249.4" r="35.2"/>
<circle fill="#2b6255" cx="157.9" cy="250.4" r="34.0"/>
<circle fill="#1993bf" cx="156.2" cy="251.2" r="32.0"/>
<circle fill="#2b6255" cx="157.9" cy="250.2" r="30.5"/>
<ellipse fill="#ec5b22" cx="157.4" cy="249.9" rx="30.0" ry="27.5" transform="rotate(0 157.4 249.9)"/>
<ellipse fill="#e8b02d" cx="159.1" cy="248.7" rx="26.5" ry="24.5" transform="rotate(0 159.1 248.7)"/>
<circle fill="#2b6255" cx="155.7" cy="246.2" r="14.1"/>
<path fill="#e8b02d" d="M262.8 274.2C257.6 270.9 264.0 259.8 266.5 254.4C269.0 249.0 273.3 244.5 277.6 242.0C282.0 239.5 289.2 239.9 292.5 239.5C295.8 239.1 296.6 233.7 297.5 239.5C298.3 245.3 303.3 268.4 297.5 274.2C291.7 280.0 267.9 277.5 262.8 274.2Z"/>
<ellipse fill="#464545" cx="276.4" cy="261.8" rx="6.4" ry="11.9" transform="rotate(25 276.4 261.8)"/>
<path fill="#1993bf" d="M81.8 246.0C85.9 244.3 119.4 249.7 128.9 255.9C138.4 262.1 133.9 274.9 138.8 283.2C143.8 291.4 152.9 301.4 158.7 305.5C164.4 309.6 171.0 300.5 173.5 308.0C176.0 315.4 174.4 339.0 173.5 350.1C172.7 361.3 171.0 367.1 168.6 374.9C166.1 382.8 166.9 393.5 158.7 397.2C150.4 400.9 122.3 400.9 119.0 397.2C115.7 393.5 133.9 381.9 138.8 374.9C143.8 367.9 146.7 362.9 148.7 355.1C150.8 347.2 152.9 335.7 151.2 327.8C149.6 320.0 144.6 315.0 138.8 308.0C133.0 300.9 122.3 292.7 116.5 285.7C110.7 278.6 109.9 272.4 104.1 265.8C98.3 259.2 77.7 247.7 81.8 246.0Z"/>
<path fill="#2b6255" d="M-1.2 285.7C1.4 270.8 8.5 299.3 14.9 308.0C21.3 316.6 29.3 329.9 37.2 337.7C45.0 345.6 54.5 350.9 62.0 355.1C69.4 359.2 74.8 362.5 81.8 362.5C88.8 362.5 97.1 355.1 104.1 355.1C111.1 355.1 119.8 355.5 123.9 362.5C128.1 369.5 149.8 391.4 128.9 397.2C108.0 403.0 20.5 415.8 -1.2 397.2C-22.9 378.6 -3.9 300.5 -1.2 285.7Z"/>
<path fill="#427e63" d="M99.2 362.5C101.2 358.4 109.9 355.1 116.5 355.1C123.1 355.1 133.0 363.3 138.8 362.5C144.6 361.7 147.9 349.7 151.2 350.1C154.5 350.5 159.1 359.2 158.7 365.0C158.2 370.8 152.9 379.4 148.7 384.8C144.6 390.2 143.0 395.1 133.9 397.2C124.8 399.3 99.2 400.1 94.2 397.2C89.2 394.3 103.3 385.6 104.1 379.9C104.9 374.1 97.1 366.6 99.2 362.5Z"/>
<path fill="#2b6255" d="M84.3 362.5C89.2 358.6 99.2 355.1 104.1 356.3C109.1 357.6 113.2 364.8 114.0 369.9C114.9 375.1 112.4 382.8 109.1 387.3C105.8 391.8 100.0 395.6 94.2 397.2C88.4 398.9 77.7 400.1 74.4 397.2C71.1 394.3 72.7 385.6 74.4 379.9C76.0 374.1 79.3 366.4 84.3 362.5Z"/>
<path fill="#4a6089" d="M-1.2 244.8C15.5 241.2 81.2 242.1 99.2 244.8C117.1 247.4 106.6 257.4 106.6 260.9C106.6 264.4 104.5 265.8 99.2 265.8C93.8 265.8 82.6 261.1 74.4 260.9C66.1 260.7 55.8 262.1 49.6 264.6C43.4 267.1 38.8 269.8 37.2 275.7C35.5 281.7 36.4 291.9 39.7 300.5C43.0 309.2 50.0 320.4 57.0 327.8C64.0 335.2 77.7 341.2 81.8 345.2C85.9 349.1 85.5 352.0 81.8 351.4C78.1 350.7 67.3 348.3 59.5 341.4C51.6 334.6 42.1 320.2 34.7 310.5C27.3 300.7 20.9 290.6 14.9 283.2C8.9 275.7 1.4 272.2 -1.2 265.8C-3.9 259.4 -18.0 248.3 -1.2 244.8Z"/>
<path fill="#4a6089" d="M-1.2 279.5C1.4 281.3 8.9 289.8 14.9 296.8C20.9 303.8 27.3 313.5 34.7 321.6C42.1 329.7 51.6 340.4 59.5 345.7C67.3 350.9 78.1 351.0 81.8 353.1C85.5 355.2 85.1 358.2 81.8 358.0C78.5 357.9 69.4 356.3 62.0 352.1C54.5 347.9 45.0 340.7 37.2 332.8C29.3 324.8 21.3 312.1 14.9 304.3C8.5 296.4 1.4 289.8 -1.2 285.7C-3.9 281.5 -3.9 277.6 -1.2 279.5Z"/>
<path fill="#ec5b22" d="M-1.2 262.1C1.9 264.6 10.9 275.3 17.4 283.2C23.8 291.0 30.0 299.9 37.2 309.2C44.4 318.5 53.1 332.2 60.7 339.0C68.4 345.7 79.3 347.3 83.0 349.6C86.8 352.0 87.0 354.2 83.0 353.1C79.1 352.0 67.6 349.9 59.5 343.2C51.4 336.5 42.1 322.3 34.7 312.9C27.3 303.6 20.9 294.3 14.9 286.9C8.9 279.5 1.4 272.4 -1.2 268.3C-3.9 264.2 -4.3 259.6 -1.2 262.1Z"/>
<path fill="#ec5b22" d="M-1.2 306.7C1.4 311.5 9.3 320.6 14.9 327.8C20.5 335.0 26.0 343.1 32.2 350.1C38.4 357.1 45.0 364.6 52.1 369.9C59.1 375.3 66.5 381.1 74.4 382.3C82.2 383.6 94.2 380.7 99.2 377.4C104.1 374.1 104.1 367.1 104.1 362.5C104.1 358.0 102.9 353.0 99.2 350.1C95.4 347.2 84.3 343.1 81.8 345.2C79.3 347.2 84.7 358.0 84.3 362.5C83.9 367.1 82.6 371.0 79.3 372.4C76.0 373.9 69.4 373.3 64.5 371.2C59.5 369.1 54.9 365.2 49.6 360.0C44.2 354.9 38.0 347.2 32.2 340.2C26.4 333.2 20.5 324.7 14.9 317.9C9.3 311.1 1.4 301.2 -1.2 299.3C-3.9 297.4 -3.9 302.0 -1.2 306.7Z"/>
<ellipse fill="#1993bf" cx="32.2" cy="322.8" rx="25.3" ry="6.7" transform="rotate(42 32.2 322.8)"/>
<path fill="#ec5b22" d="M37.2 290.6C36.6 284.0 38.0 277.8 40.9 273.3C43.8 268.7 49.0 265.5 54.5 263.4C60.1 261.2 67.3 260.2 74.4 260.4C81.4 260.6 90.9 261.6 96.7 264.6C102.5 267.6 104.9 272.6 109.1 278.2C113.2 283.8 118.8 291.0 121.5 298.1C124.2 305.1 125.2 313.3 125.2 320.4C125.2 327.4 124.2 335.2 121.5 340.2C118.8 345.2 112.8 348.5 109.1 350.1C105.4 351.8 103.7 350.9 99.2 350.1C94.6 349.3 88.0 348.5 81.8 345.2C75.6 341.9 68.2 335.7 62.0 330.3C55.8 324.9 48.8 319.5 44.6 312.9C40.5 306.3 37.8 297.2 37.2 290.6Z"/>
<path fill="#1993bf" d="M58.5 219.3C59.0 216.6 60.6 217.7 61.3 219.3C61.9 221.0 61.1 227.6 62.5 229.2C63.9 230.8 67.5 228.2 69.9 229.0C72.4 229.8 75.7 232.0 77.4 234.2C79.0 236.4 76.3 240.3 79.8 242.2C83.4 244.2 95.1 244.9 98.4 246.0C101.8 247.1 103.0 248.7 99.9 248.8C96.8 249.0 85.0 247.1 79.8 246.8C74.6 246.6 72.0 247.9 68.7 247.5C65.4 247.0 62.0 246.4 60.3 244.4C58.5 242.3 58.6 239.6 58.3 235.4C58.0 231.3 58.0 222.0 58.5 219.3Z"/>
<path fill="none" stroke="#427e63" stroke-width="4.7" stroke-linecap="round" d="M79.8 244.4C82.9 244.9 93.5 244.7 98.4 247.6C103.4 250.4 106.3 256.5 109.6 261.5C112.9 266.5 114.7 271.8 118.3 277.6C121.8 283.3 128.6 293.1 130.7 296.1"/>
<path fill="#ec5b22" d="M73.6 247.2C74.3 246.5 80.3 247.3 83.6 248.4C86.9 249.6 90.4 251.4 93.5 254.0C96.6 256.6 99.3 260.0 102.2 263.9C105.0 267.9 108.9 273.8 110.8 277.6C112.8 281.3 114.1 282.9 113.9 286.2C113.7 289.5 113.4 295.5 109.6 297.4C105.8 299.2 93.7 299.7 91.0 297.4C88.3 295.1 93.5 288.1 93.5 283.8C93.5 279.4 92.2 275.1 91.0 271.4C89.8 267.6 87.9 264.6 86.0 261.5C84.2 258.4 81.9 255.2 79.8 252.8C77.8 250.4 73.0 247.9 73.6 247.2Z"/>
<path fill="none" stroke="#4a6089" stroke-width="4.5" stroke-linecap="round" d="M37.1 290.8C37.7 294.8 38.2 308.5 40.8 314.4C43.4 320.3 47.9 323.3 52.6 326.2C57.2 329.1 63.1 330.9 68.7 331.7C74.3 332.6 81.0 332.3 86.0 331.1C91.1 329.9 96.1 327.7 99.1 324.5C102.0 321.3 103.0 316.3 103.6 311.9C104.3 307.5 102.9 300.6 102.8 298.3"/>
<path fill="none" stroke="#4a6089" stroke-width="3.5" stroke-linecap="round" d="M84.8 262.0C86.9 264.7 94.2 272.5 97.2 278.1C100.2 283.7 101.9 289.9 102.9 295.5C103.9 301.0 103.1 308.9 103.1 311.6"/>
<ellipse fill="#464545" cx="69.4" cy="294.3" rx="23.5" ry="24.8" transform="rotate(0 69.4 294.3)"/>
<path fill="#ec5b22" d="M55.8 283.2C56.5 283.0 58.0 290.8 60.7 293.1C63.4 295.4 68.2 297.0 71.9 296.8C75.6 296.6 80.8 294.1 83.0 291.9C85.3 289.6 85.3 282.2 85.5 283.2C85.7 284.2 86.1 294.4 84.3 298.1C82.4 301.7 77.9 304.2 74.4 305.0C70.9 305.8 66.2 304.8 63.2 303.0C60.2 301.2 57.8 297.6 56.5 294.3C55.3 291.0 55.1 283.4 55.8 283.2Z"/>
<circle fill="#2b6255" cx="71.4" cy="283.2" r="12.4"/>
<path fill="#4a6089" d="M70.6 337.7C71.4 336.9 81.4 336.5 86.0 335.7C90.7 334.9 95.1 333.4 98.4 332.7C101.8 332.0 105.0 330.8 106.1 331.5C107.2 332.2 106.6 335.6 104.9 336.9C103.2 338.3 99.9 338.8 96.0 339.4C92.0 340.0 85.3 340.9 81.1 340.7C76.9 340.4 69.7 338.5 70.6 337.7Z"/>
<path fill="#464545" d="M70.6 337.7C71.0 337.1 79.1 336.9 81.1 337.2C83.0 337.5 82.7 338.8 82.3 339.4C81.9 340.0 80.6 340.9 78.6 340.7C76.6 340.4 70.1 338.3 70.6 337.7Z"/>
<ellipse fill="#2b6255" cx="102.4" cy="333.6" rx="3.0" ry="3.5" transform="rotate(0 102.4 333.6)"/>
<path fill="none" stroke="#1993bf" stroke-width="5.0" stroke-linecap="round" d="M40.2 350.8C42.7 353.3 50.3 361.9 55.1 365.6C59.8 369.4 64.6 372.1 68.7 373.3C72.8 374.6 77.1 374.6 79.8 373.3C82.6 372.1 84.4 368.4 85.0 365.6C85.7 362.9 83.8 358.4 83.6 357.0"/>
<path fill="none" stroke="#1993bf" stroke-width="7.2" stroke-linecap="round" d="M148.0 353.3C145.5 355.1 137.7 360.7 133.1 364.4C128.6 368.1 124.2 371.4 120.7 375.6C117.2 379.7 113.9 385.7 112.1 389.2C110.2 392.7 110.0 395.4 109.6 396.6"/>
<path fill="none" stroke="#1993bf" stroke-width="5.0" stroke-linecap="round" d="M148.0 374.9C146.3 376.5 140.6 380.8 138.1 384.2C135.6 387.6 134.0 393.5 133.1 395.4"/>
<path fill="#4a6089" d="M116.5 286.9C117.3 284.4 124.4 289.6 128.9 293.1C133.4 296.6 139.4 302.2 143.8 308.0C148.1 313.8 153.3 320.8 154.9 327.8C156.6 334.8 156.0 344.5 153.7 350.1C151.4 355.7 145.8 359.2 141.3 361.3C136.8 363.3 130.6 364.0 126.4 362.5C122.3 361.1 117.7 358.4 116.5 352.6C115.3 346.8 117.7 335.2 119.0 327.8C120.2 320.4 124.4 314.8 123.9 308.0C123.5 301.2 115.7 289.4 116.5 286.9Z"/>
<path fill="#464545" d="M122.0 298.6C122.7 297.9 126.1 300.6 127.7 303.0C129.2 305.4 130.8 309.8 131.4 312.9C131.9 316.0 131.7 321.2 130.9 321.6C130.1 322.0 127.7 317.9 126.4 315.4C125.2 312.9 124.2 309.5 123.5 306.7C122.7 303.9 121.3 299.2 122.0 298.6Z"/>
<ellipse fill="#e8b02d" cx="135.1" cy="329.0" rx="2.5" ry="6.4" transform="rotate(10 135.1 329.0)"/>
<path fill="#e8b02d" d="M-1.2 335.2C0.2 327.0 5.0 336.1 7.4 339.0C9.9 341.9 12.6 347.4 13.6 352.6C14.7 357.8 14.5 364.6 13.6 369.9C12.8 375.3 11.2 381.7 8.7 384.8C6.2 387.9 0.4 396.8 -1.2 388.5C-2.9 380.3 -2.7 343.5 -1.2 335.2Z"/>
<path fill="#4a6089" d="M-1.2 348.1C-0.5 345.4 2.4 349.7 3.5 351.4C4.5 353.0 5.0 355.8 5.0 358.0C4.9 360.3 4.0 363.4 3.0 365.0C1.9 366.6 -0.5 370.3 -1.2 367.5C-1.9 364.7 -2.0 350.8 -1.2 348.1Z"/>
<path fill="#4a6089" d="M14.9 352.6C16.5 348.5 24.0 348.5 29.7 350.1C35.5 351.8 43.8 358.4 49.6 362.5C55.4 366.6 64.5 372.0 64.5 374.9C64.5 377.8 53.7 376.1 49.6 379.9C45.4 383.6 43.8 394.3 39.7 397.2C35.5 400.1 28.1 400.9 24.8 397.2C21.5 393.5 21.5 382.3 19.8 374.9C18.2 367.5 13.2 356.7 14.9 352.6Z"/>
<path fill="#464545" d="M24.8 365.0C25.8 364.2 32.2 369.5 34.7 374.9C37.2 380.3 40.3 393.5 39.7 397.2C39.0 400.9 32.8 400.1 31.0 397.2C29.1 394.3 29.5 385.2 28.5 379.9C27.5 374.5 23.8 365.8 24.8 365.0Z"/>
<circle fill="#4a6089" cx="161.1" cy="249.4" r="35.2"/>
<circle fill="#2b6255" cx="157.9" cy="250.4" r="34.0"/>
<circle fill="#1993bf" cx="156.2" cy="251.2" r="32.0"/>
<circle fill="#2b6255" cx="157.9" cy="250.2" r="30.5"/>
<ellipse fill="#ec5b22" cx="157.4" cy="249.9" rx="30.0" ry="27.5" transform="rotate(0 157.4 249.9)"/>
<ellipse fill="#e8b02d" cx="159.1" cy="248.7" rx="26.5" ry="24.5" transform="rotate(0 159.1 248.7)"/>
<circle fill="#2b6255" cx="155.7" cy="246.2" r="14.1"/>
<path fill="#2b6255" d="M123.9 260.9C124.8 259.6 132.6 272.0 138.8 275.7C145.0 279.5 153.7 282.4 161.1 283.2C168.6 284.0 177.2 283.2 183.4 280.7C189.6 278.2 194.6 271.6 198.3 268.3C202.0 265.0 203.3 258.0 205.8 260.9C208.2 263.8 215.3 279.9 213.2 285.7C211.1 291.4 200.0 293.3 193.4 295.6C186.7 297.9 180.1 299.3 173.5 299.3C166.9 299.3 160.3 298.3 153.7 295.6C147.1 292.9 138.8 289.0 133.9 283.2C128.9 277.4 123.1 262.1 123.9 260.9Z"/>
<path fill="#427e63" d="M195.8 244.8C202.0 242.1 225.2 242.9 230.5 244.8C235.9 246.6 230.1 252.4 228.1 255.9C226.0 259.4 222.3 263.6 218.1 265.8C214.0 268.1 207.4 270.4 203.3 269.5C199.1 268.7 194.6 265.0 193.4 260.9C192.1 256.7 189.6 247.4 195.8 244.8Z"/>
<path fill="#1993bf" d="M195.8 295.6C198.0 292.5 201.2 288.3 205.8 285.7C210.3 283.0 217.7 279.9 223.1 279.5C228.5 279.1 235.3 280.1 238.0 283.2C240.7 286.3 240.5 293.5 239.2 298.1C238.0 302.6 234.9 307.4 230.5 310.5C226.2 313.6 218.6 316.2 213.2 316.6C207.8 317.1 201.7 315.0 198.3 312.9C194.9 310.9 193.3 307.1 192.9 304.3C192.4 301.4 193.7 298.7 195.8 295.6Z"/>
<ellipse fill="#e8b02d" cx="214.4" cy="296.3" rx="8.2" ry="4.5" transform="rotate(-20 214.4 296.3)"/>
<circle fill="#464545" cx="215.7" cy="274.5" r="11.9"/>
<path fill="#ec5b22" d="M230.5 270.8C231.6 269.3 236.1 267.1 238.0 267.1C239.8 267.1 241.9 269.3 241.7 270.8C241.5 272.3 238.4 275.4 236.7 276.2C235.1 277.1 232.8 276.7 231.8 275.7C230.7 274.8 229.5 272.2 230.5 270.8Z"/>
<path fill="#4a6089" d="M144.8 381.8C147.3 378.5 154.1 379.5 159.7 379.5C165.3 379.5 171.1 380.6 178.3 381.8C185.5 383.0 195.4 384.8 203.1 386.7C210.7 388.6 220.6 391.1 224.1 393.2C227.6 395.2 237.3 398.1 224.1 399.1C210.9 400.1 158.0 402.0 144.8 399.1C131.6 396.2 142.3 385.0 144.8 381.8Z"/>
<path fill="#2b6255" d="M163.4 357.0C164.9 353.9 168.6 350.2 172.1 350.8C175.6 351.4 184.5 358.6 184.5 360.7C184.5 362.8 174.6 361.3 172.1 363.2C169.6 365.0 168.6 369.2 169.6 371.8C170.6 374.5 173.7 377.6 178.3 379.3C182.8 380.9 190.7 380.5 196.9 381.8C203.1 383.0 210.3 385.9 215.5 386.7C220.6 387.5 224.3 388.0 227.8 386.7C231.4 385.5 235.5 383.2 236.5 379.3C237.6 375.4 233.0 363.2 234.0 363.2C235.1 363.2 241.8 374.8 242.7 379.3C243.6 383.7 243.1 387.6 239.6 389.8C236.1 392.0 227.7 392.6 221.6 392.3C215.6 391.9 209.3 389.0 203.1 387.7C196.9 386.4 190.1 385.8 184.5 384.5C178.9 383.1 173.2 382.0 169.6 379.5C166.1 377.0 164.2 373.1 163.2 369.4C162.1 365.6 161.9 360.1 163.4 357.0Z"/>
<path fill="#e8b02d" d="M297.5 244.8C294.2 238.2 283.4 244.6 277.6 246.0C271.9 247.4 266.3 250.1 262.8 253.4C259.3 256.7 257.4 261.7 256.6 265.8C255.7 270.0 258.8 273.7 257.8 278.2C256.8 282.8 254.1 288.6 250.4 293.1C246.7 297.6 241.7 302.2 235.5 305.5C229.3 308.8 221.0 311.9 213.2 312.9C205.3 314.0 195.4 310.5 188.4 311.7C181.4 312.9 175.0 316.9 171.0 320.4C167.1 323.9 164.8 328.2 164.8 332.8C164.8 337.3 168.2 343.5 171.0 347.6C173.9 351.8 181.8 355.1 182.2 357.6C182.6 360.0 175.4 359.6 173.5 362.5C171.7 365.4 169.4 371.2 171.0 374.9C172.7 378.6 177.2 382.7 183.4 384.8C189.6 387.0 200.8 388.2 208.2 387.8C215.7 387.4 223.9 385.3 228.1 382.3C232.2 379.4 232.8 374.5 233.0 369.9C233.2 365.4 229.5 362.1 229.3 355.1C229.1 348.0 229.1 335.7 231.8 327.8C234.5 320.0 239.4 313.3 245.4 308.0C251.4 302.6 261.1 298.9 267.7 295.6C274.3 292.3 280.1 289.8 285.1 288.1C290.0 286.5 295.4 292.9 297.5 285.7C299.5 278.4 300.8 251.4 297.5 244.8Z"/>
<path fill="#427e63" d="M241.7 263.4C243.6 259.2 249.3 258.0 252.9 258.4C256.4 258.8 261.5 262.1 262.8 265.8C264.0 269.5 262.4 276.6 260.3 280.7C258.2 284.8 253.5 290.2 250.4 290.6C247.3 291.0 243.1 287.7 241.7 283.2C240.2 278.6 239.8 267.5 241.7 263.4Z"/>
<path fill="#464545" d="M265.2 255.9C267.2 253.6 272.5 251.8 275.2 252.2C277.8 252.6 280.7 254.9 281.4 258.4C282.0 261.9 281.2 268.3 278.9 273.3C276.6 278.2 272.5 283.8 267.7 288.1C263.0 292.5 255.7 295.8 250.4 299.3C245.0 302.8 241.7 306.3 235.5 309.2C229.3 312.1 220.6 315.2 213.2 316.6C205.8 318.1 196.2 316.4 190.9 317.9C185.5 319.3 183.4 323.7 181.0 325.3C178.6 327.0 177.1 328.8 176.5 327.8C175.9 326.8 175.3 321.6 177.2 319.1C179.2 316.6 182.4 314.3 188.4 312.9C194.4 311.6 205.8 312.8 213.2 310.9C220.6 309.1 227.2 305.2 233.0 301.8C238.8 298.4 243.3 294.5 247.9 290.6C252.4 286.7 257.7 282.4 260.3 278.2C262.8 274.1 262.4 269.5 263.3 265.8C264.1 262.1 263.3 258.2 265.2 255.9Z"/>
<path fill="#464545" d="M290.7 266.7C292.1 263.0 294.3 254.3 295.6 250.6C297.0 246.9 298.2 239.0 298.7 244.4C299.3 249.8 300.5 275.6 298.7 282.8C297.0 290.0 292.0 285.5 288.2 287.8C284.4 290.0 279.1 293.9 275.8 296.4C272.5 299.0 271.9 302.1 268.4 303.2C264.9 304.4 255.6 304.6 254.8 303.2C253.9 301.9 259.9 298.2 263.4 295.2C266.9 292.2 271.9 288.7 275.8 285.0C279.7 281.3 284.5 275.9 287.0 272.9C289.5 269.8 289.2 270.4 290.7 266.7Z"/>
<path fill="#4a6089" d="M298.7 274.7C297.4 270.9 293.7 277.9 290.7 280.3C287.7 282.7 284.1 285.9 280.8 289.0C277.5 292.1 272.9 296.5 270.9 298.9C268.8 301.3 263.7 302.5 268.4 303.2C273.0 304.0 293.7 308.0 298.7 303.2C303.8 298.5 300.1 278.6 298.7 274.7Z"/>
<path fill="none" stroke="#1993bf" stroke-width="3.7" stroke-linecap="round" d="M298.7 280.3C297.0 281.6 291.4 285.1 288.2 287.8C285.0 290.4 281.8 293.9 279.5 296.4C277.3 299.0 275.4 302.1 274.6 303.2"/>
<path fill="#427e63" d="M298.7 285.3C297.4 283.3 293.3 289.2 290.7 291.5C288.1 293.7 284.9 296.9 283.3 298.9C281.6 300.9 278.2 302.5 280.8 303.2C283.4 304.0 295.8 306.2 298.7 303.2C301.7 300.3 300.1 287.2 298.7 285.3Z"/>
<path fill="none" stroke="#ec5b22" stroke-width="1.5" stroke-linecap="round" d="M298.7 286.8C297.4 287.6 293.7 289.7 290.7 291.7C287.7 293.8 282.4 297.9 280.8 299.2"/>
<path fill="#4a6089" d="M182.2 327.8C185.4 324.9 192.3 322.4 198.3 320.4C204.3 318.4 213.0 316.1 218.1 315.9C223.3 315.7 227.2 315.5 229.3 319.1C231.4 322.8 231.4 332.1 230.5 337.7C229.7 343.3 227.6 348.7 224.3 352.6C221.0 356.5 215.9 359.9 210.7 361.3C205.5 362.6 198.1 362.4 193.4 360.5C188.6 358.7 184.6 353.9 182.2 350.1C179.8 346.3 179.0 341.4 179.0 337.7C179.0 334.0 179.0 330.7 182.2 327.8Z"/>
<path fill="#ec5b22" d="M185.4 332.8C187.5 329.4 193.3 327.2 198.3 324.8C203.4 322.4 210.9 319.5 215.7 318.4C220.4 317.2 224.8 315.5 226.8 317.9C228.8 320.3 228.6 327.8 227.6 332.8C226.5 337.7 223.8 343.9 220.6 347.6C217.4 351.4 212.6 354.0 208.2 355.1C203.9 356.1 198.3 355.5 194.6 353.8C190.9 352.2 187.4 348.7 185.9 345.2C184.4 341.6 183.4 336.2 185.4 332.8Z"/>
<path fill="#ec5b22" d="M185.4 364.5C187.5 363.6 193.7 366.3 198.3 366.0C202.9 365.6 208.8 364.7 213.2 362.5C217.5 360.4 222.4 352.6 224.3 353.1C226.2 353.6 226.5 362.0 224.6 365.5C222.7 369.0 218.0 372.3 213.2 373.9C208.4 375.5 200.4 375.6 195.8 375.2C191.3 374.7 187.7 373.2 185.9 371.4C184.2 369.7 183.4 365.4 185.4 364.5Z"/>
<path fill="#2b6255" d="M238.0 320.4C240.5 313.3 242.1 311.5 247.9 308.0C253.7 304.5 264.4 301.4 272.7 299.3C280.9 297.2 293.3 279.3 297.5 295.6C301.6 311.9 305.7 380.3 297.5 397.2C289.2 414.2 258.2 400.9 247.9 397.2C237.6 393.5 238.0 382.8 235.5 374.9C233.0 367.1 232.6 359.2 233.0 350.1C233.4 341.0 235.5 327.4 238.0 320.4Z"/>
<circle fill="#4a6089" cx="264.0" cy="335.2" r="31.0"/>
<circle fill="#1993bf" cx="262.8" cy="334.0" r="23.5"/>
<path fill="#427e63" d="M285.1 352.6C287.6 349.7 295.4 342.3 297.5 347.6C299.5 353.0 299.1 379.4 297.5 384.8C295.8 390.2 290.0 383.2 287.6 379.9C285.1 376.6 283.0 369.5 282.6 365.0C282.2 360.4 282.6 355.5 285.1 352.6Z"/>
<path fill="none" stroke="#1993bf" stroke-width="4.2" stroke-linecap="round" d="M230.6 334.7C231.1 338.4 231.9 350.4 234.0 357.0C236.2 363.6 239.4 369.0 243.3 374.3C247.3 379.7 252.9 385.1 257.6 389.2C262.2 393.3 268.9 397.5 271.2 399.1"/>
<path fill="none" stroke="#e8b02d" stroke-width="3.0" stroke-linecap="round" d="M227.2 327.2C228.1 330.7 229.7 342.1 232.2 348.3C234.7 354.5 237.7 359.5 242.1 364.7C246.5 369.9 252.9 375.5 258.8 379.5C264.7 383.6 271.2 386.8 277.4 388.8C283.6 390.9 292.9 391.4 296.0 391.9"/>
<path fill="none" stroke="#ec5b22" stroke-width="2.0" stroke-linecap="round" d="M272.7 295.6C274.7 294.8 280.9 292.1 285.1 290.6C289.2 289.2 295.4 287.5 297.5 286.9"/>
<path fill="#464545" d="M138.8 388.5C140.9 385.9 145.4 381.7 148.7 381.1C152.0 380.5 156.6 382.1 158.7 384.8C160.7 387.5 164.8 395.1 161.1 397.2C157.4 399.3 140.1 398.7 136.3 397.2C132.6 395.8 136.8 391.2 138.8 388.5Z"/>
<ellipse fill="#2b6255" cx="187.2" cy="397.2" rx="16.1" ry="12.4" transform="rotate(0 187.2 397.2)"/>
</g></svg>

<!-- ===== devtools ===== -->
<div class="tab" style="left:665.7px;top:443px;width:70.1px;height:16px"></div>
<svg class="ic" style="left:671.6px;top:449.3px;stroke:#e0ac2b;stroke-width:1.15" width="6.2" height="5.6" viewBox="0 0 8 6" preserveAspectRatio="none"><path d="M0.6 0.8L3 2.9 0.6 5M4.2 5.3h3.4"/></svg>
<div class="t" style="left:682.90px;top:446.00px;font-size:8.6px;transform:scaleX(0.909);color:#f0f3f6;font-weight:bold">Devtools</div>
<svg class="ic" style="left:725.5px;top:449px;stroke-width:0.85;stroke-linecap:butt" width="4.2" height="4.2" viewBox="0 0 4 4"><path d="M0 0l4 4M4 0L0 4"/></svg>
<svg style="left:1188.7px;top:448.6px" width="1.8" height="7.6" viewBox="0 0 2 7.6" preserveAspectRatio="none"><circle cx="1" cy="0.9" r="0.8" fill="#c9cfd6"/><circle cx="1" cy="3.8" r="0.8" fill="#c9cfd6"/><circle cx="1" cy="6.7" r="0.8" fill="#c9cfd6"/></svg>

<div class="panel" style="left:665.2px;top:462.8px;width:531.5px;height:117px"></div>
<div class="a" style="left:666.2px;top:482.7px;width:529.5px;height:1px;background:#25272b"></div>
<div class="a" style="left:901.1px;top:464px;width:1px;height:19px;background:#25272b"></div>
<div class="a" style="left:841.4px;top:481.9px;width:55.4px;height:1.6px;background:#1f87f2"></div>
<svg class="ic" style="left:672px;top:469.4px;stroke:#b9c0c8;stroke-width:0.95" width="7.8" height="7.6" viewBox="0 0 8 8"><rect x="0.5" y="0.5" width="2.6" height="2.8" rx=".6"/><rect x="0.5" y="4.8" width="2.6" height="2.7" rx=".6"/><rect x="4.8" y="0.5" width="2.7" height="7" rx="1.3"/></svg>
<div class="t" style="left:684.40px;top:467.00px;font-size:8.9px;transform:scaleX(0.978);color:#c3c9d0">Inspector</div>
<svg class="ic" style="left:733.7px;top:471px;stroke:#b9c0c8;stroke-width:1.05" width="7" height="5.4" viewBox="0 0 8 6" preserveAspectRatio="none"><path d="M0.6 0.8L3 2.9 0.6 5M4.2 5.3h3.4"/></svg>
<div class="t" style="left:745.70px;top:467.00px;font-size:8.9px;transform:scaleX(0.931);color:#c3c9d0">Console</div>
<svg class="ic" style="left:789.2px;top:470.3px;stroke:#b9c0c8;stroke-width:1.1" width="7.6" height="6" viewBox="0 0 9 7"><path d="M0.5 2.2a5.8 5.8 0 0 1 8 0M1.9 3.7a3.8 3.8 0 0 1 5.2 0M3.3 5.1a1.8 1.8 0 0 1 2.4 0"/><circle cx="4.5" cy="6.3" r=".4" fill="#b9c0c8"/></svg>
<div class="t" style="left:801.80px;top:467.00px;font-size:8.9px;transform:scaleX(0.990);color:#c3c9d0">Network</div>
<svg class="ic" style="left:847.3px;top:469.5px;stroke:#e6eaee;stroke-width:0.95" width="8.7" height="7.9" viewBox="0 0 9 9"><path d="M3 2.4a1.5 1.5 0 0 1 3 0M2.4 3.4h4.2v2.4a2.1 2.1 0 0 1-4.2 0zM0.6 4.6h1.8M6.6 4.6h1.8M0.9 7.6l1.6-1M8.1 7.6l-1.6-1M0.9 1.8l1.7 1.4M8.1 1.8L6.4 3.2M4.5 5v2.6"/></svg>
<div class="t" style="left:860.00px;top:467.00px;font-size:8.9px;transform:scaleX(0.919);color:#eef1f4">Sources</div>
<div class="t" style="left:909.50px;top:467.00px;font-size:8.4px;transform:scaleX(0.888);color:#7d858e">Filter sources...</div>

<svg class="ic" style="left:673px;top:490.1px;stroke-width:1.15" width="5.7" height="3.4" viewBox="0 0 6 4"><path d="M0.6 0.6L3 3.2 5.4 0.6"/></svg>
<svg class="ic" style="left:683.8px;top:487.6px;stroke-width:1" width="8.4" height="8.4" viewBox="0 0 8 8"><circle cx="4" cy="4" r="3.5"/><path d="M0.5 4h7M4 0.5c-1.6 1.2-1.6 5.8 0 7M4 0.5c1.6 1.2 1.6 5.8 0 7"/></svg>
<div class="t" style="left:695.10px;top:486.50px;font-size:8.2px;transform:scaleX(0.940);">cdn.jsdelivr.net</div>
<div class="a" style="left:674.7px;top:500px;width:1px;height:77px;background:#2b2d31"></div>
<svg class="ic" style="left:684.8px;top:504.8px;stroke-width:1.15" width="3.9" height="5.6" viewBox="0 0 4 6"><path d="M0.6 0.6L3.2 3 0.6 5.4"/></svg>
<svg class="ic" style="left:694.2px;top:503.7px;stroke:#2f86e8;stroke-width:1.05" width="9.3" height="7.3" viewBox="0 0 8 7" preserveAspectRatio="none"><path d="M0.5 5.6V1.3a.8.8 0 0 1 .8-.8h1.6l.9 1.1h2.9a.8.8 0 0 1 .8.8v3.2a.8.8 0 0 1-.8.8H1.3a.8.8 0 0 1-.8-.8z"/></svg>
<div class="t" style="left:706.00px;top:502.50px;font-size:8.2px;transform:scaleX(0.939);">npm/p5@1.11.5/lib</div>
<svg class="ic" style="left:673px;top:521.2px;stroke-width:1.15" width="5.7" height="3.4" viewBox="0 0 6 4"><path d="M0.6 0.6L3 3.2 5.4 0.6"/></svg>
<svg class="ic" style="left:683.8px;top:519.1px;stroke-width:1" width="8.4" height="8.4" viewBox="0 0 8 8"><circle cx="4" cy="4" r="3.5"/><path d="M0.5 4h7M4 0.5c-1.6 1.2-1.6 5.8 0 7M4 0.5c1.6 1.2 1.6 5.8 0 7"/></svg>
<div class="t" style="left:695.10px;top:518.50px;font-size:8.2px;transform:scaleX(0.904);">Virtual-File-System</div>
<svg class="ic" style="left:683.6px;top:535.8px;stroke-width:0.95" width="7.1" height="7.4" viewBox="0 0 7 8"><path d="M4.2 0.5H1.3a.8.8 0 0 0-.8.8v5.4a.8.8 0 0 0 .8.8h4.4a.8.8 0 0 0 .8-.8V2.8z M4.2 0.5v2.3h2.3"/></svg>
<div class="t" style="left:694.20px;top:534.50px;font-size:8.2px;transform:scaleX(0.961);">index.html [document]</div>
<svg class="ic" style="left:683.6px;top:551.3px;stroke-width:0.95" width="7.1" height="7.4" viewBox="0 0 7 8"><path d="M4.2 0.5H1.3a.8.8 0 0 0-.8.8v5.4a.8.8 0 0 0 .8.8h4.4a.8.8 0 0 0 .8-.8V2.8z M4.2 0.5v2.3h2.3"/></svg>
<div class="t" style="left:694.20px;top:549.50px;font-size:8.2px;transform:scaleX(0.929);">sketch.js [script]</div>
<svg class="ic" style="left:683.6px;top:566.4px;stroke-width:0.95" width="7.1" height="7.4" viewBox="0 0 7 8"><path d="M4.2 0.5H1.3a.8.8 0 0 0-.8.8v5.4a.8.8 0 0 0 .8.8h4.4a.8.8 0 0 0 .8-.8V2.8z M4.2 0.5v2.3h2.3"/></svg>
<div class="t" style="left:694.20px;top:565.50px;font-size:8.2px;transform:scaleX(0.909);">style.css [style]</div>
<div class="a" style="left:1190.2px;top:484px;width:5.5px;height:94.5px;background:#1b1d20"></div>
<div class="a" style="left:1190.2px;top:484px;width:5.5px;height:72px;background:#33383d"></div>

<!-- ===== status bar ===== -->
<svg class="ic" style="left:5.3px;top:585.5px;stroke-width:1" width="5.5" height="6.3" viewBox="0 0 7 8"><path d="M4.2 0.5H1.3a.8.8 0 0 0-.8.8v5.4a.8.8 0 0 0 .8.8h4.4a.8.8 0 0 0 .8-.8V2.8z M4.2 0.5v2.3h2.3"/></svg>
<div class="t" style="left:13.75px;top:582.00px;font-size:8.3px;transform:scaleX(0.929);color:#c3c9d0">sketch.js</div>
<svg style="left:561.6px;top:584px" width="6.4" height="7.6" viewBox="0 0 7 8.5" preserveAspectRatio="none"><path d="M0.3 0.3L6.8 4.25 0.3 8.2z" fill="#1f87f2"/></svg>
<div class="a" style="left:579.9px;top:584.3px;width:7.2px;height:7.2px;background:#b9c7d0;border-radius:1px"></div>
<div class="t" style="left:983.00px;top:582.50px;font-size:8.2px;transform:scaleX(0.912);color:#c3c9d0">Ln 12, Col 25</div>
<svg class="ic" style="left:1035.6px;top:584.5px;stroke:#a9b7c2;stroke-width:1" width="8.2" height="7.1" viewBox="0 0 9 9"><path d="M1.6 6.8A3.9 3.9 0 1 1 7.4 6.8M2.9 5.6a2.1 2.1 0 1 1 3.2 0M4.5 4.2L3 8.6M4.5 4.2L6 8.6"/></svg>
<div class="t" style="left:1047.10px;top:582.50px;font-size:8.2px;transform:scaleX(0.941);color:#c3c9d0">Preview: Iframe</div>
<svg style="left:1110.3px;top:584.5px" width="8.8" height="6.9" viewBox="0 0 8 7" preserveAspectRatio="none"><path d="M4 6.8C1.4 4.8 0.2 3.5 0.2 2.1A1.9 1.9 0 0 1 4 1.3 1.9 1.9 0 0 1 7.8 2.1C7.8 3.5 6.6 4.8 4 6.8z" fill="#e5484d"/></svg>
<div class="t" style="left:1122.40px;top:582.50px;font-size:8.2px;transform:scaleX(0.855);color:#c3c9d0">5</div>
<svg class="ic" style="left:1141px;top:584.5px;stroke-width:1.05" width="5.3" height="7.1" viewBox="0 0 6 8"><circle cx="1" cy="1" r=".7"/><circle cx="5" cy="1" r=".7"/><circle cx="3" cy="7" r=".7"/><path d="M1 1.8v.8a1 1 0 0 0 1 1h2a1 1 0 0 0 1-1v-.8M3 3.6v2.6"/></svg>
<div class="t" style="left:1150.60px;top:582.50px;font-size:8.2px;transform:scaleX(0.855);color:#c3c9d0">1</div>
<svg class="ic" style="left:1168.4px;top:583.9px;stroke-width:1" width="8.4" height="7.7" viewBox="0 0 8 8"><path d="M0.5 7.4V1.4a.9.9 0 0 1 .9-.9h5.2a.9.9 0 0 1 .9.9v3.4a.9.9 0 0 1-.9.9H2.2z M2.2 2.4h3.6M2.2 3.8h2.4"/></svg>
<div class="t" style="left:1179.80px;top:582.50px;font-size:8.2px;transform:scaleX(0.877);color:#c3c9d0">2</div>
<div class="a" style="left:1198.6px;top:582.5px;width:1.4px;height:14.5px;background:#1565d8"></div>

</div>
</body></html>
